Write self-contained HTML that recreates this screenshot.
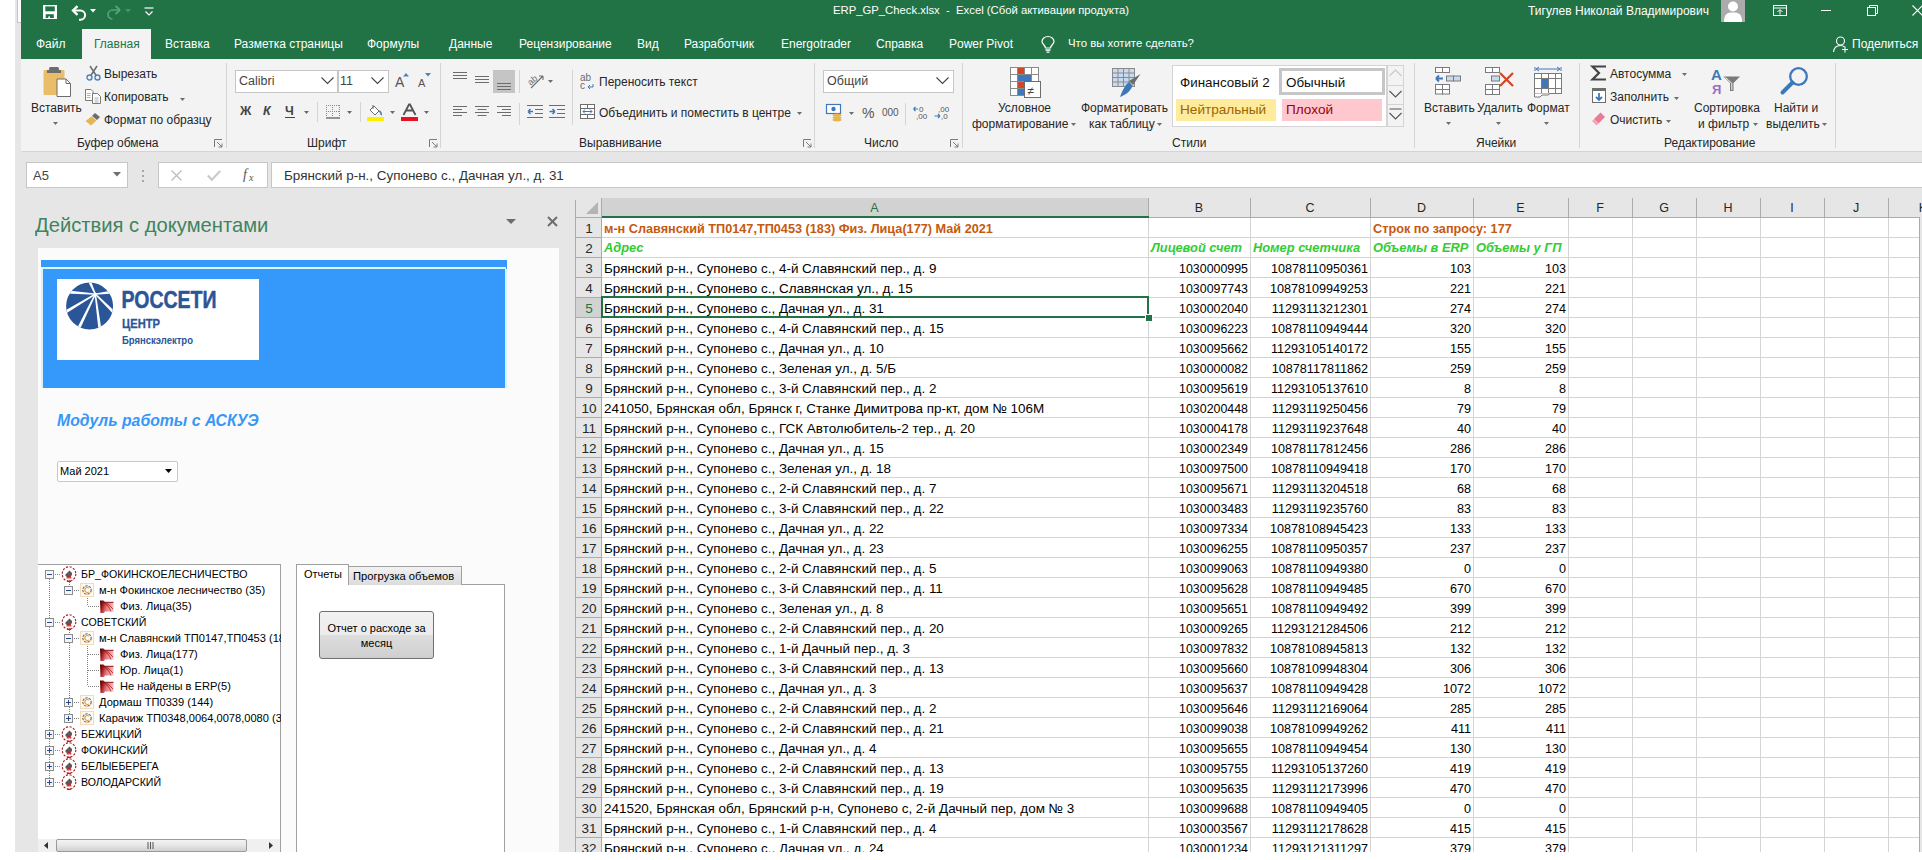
<!DOCTYPE html>
<html><head><meta charset="utf-8"><title>Excel</title>
<style>
html,body{margin:0;padding:0;}
body{width:1922px;height:860px;overflow:hidden;background:#fff;font-family:"Liberation Sans", sans-serif;}
#root{position:relative;width:1922px;height:860px;overflow:hidden;}
.t{position:absolute;white-space:pre;}
.r{position:absolute;}
.s{position:absolute;overflow:visible;}
</style></head><body><div id="root">
<div class="r" style="left:15px;top:0px;width:1907px;height:852px;background:#e6e6e6;"></div><div class="r" style="left:17px;top:0px;width:4px;height:22px;background:#fdfdfd;"></div><div class="r" style="left:17px;top:0px;width:1px;height:22px;background:#c4c4c4;"></div><div class="r" style="left:17px;top:22px;width:4px;height:1px;background:#c4c4c4;"></div><div class="r" style="left:21px;top:0px;width:1901px;height:59px;background:#217346;"></div><div class="r" style="left:21px;top:59px;width:1901px;height:92px;background:#f3f3f3;"></div><div class="r" style="left:21px;top:151px;width:1901px;height:1px;background:#d5d5d5;"></div><svg class="s" style="left:43px;top:5px;" width="14" height="14" viewBox="0 0 14 14"><rect x="0" y="0" width="14" height="14" fill="#fff"/><rect x="2.3" y="1.4" width="9.5" height="4.9" fill="#217346"/><rect x="2.7" y="9.2" width="8.1" height="3.8" fill="#217346"/><rect x="5.3" y="11.4" width="1.7" height="1.7" fill="#fff"/></svg><svg class="s" style="left:71px;top:4.5px;" width="16" height="17" viewBox="0 0 16 17"><path d="M6.5 1.2 L2 5.5 L6.5 9.8" fill="none" stroke="#fff" stroke-width="2.3"/><path d="M2.5 5.5 H9.5 A4.6 4.6 0 0 1 9.5 14.7 H8" fill="none" stroke="#fff" stroke-width="2"/></svg><svg class="s" style="left:90px;top:9px;" width="6" height="4" viewBox="0 0 6 4"><path d="M0 0 H6 L3 3.5 Z" fill="#fff"/></svg><svg class="s" style="left:106px;top:4px;" width="16" height="16" viewBox="0 0 16 16"><path d="M14 6 L9.5 2 M14 6 L9.5 10 M14 6 H6.5 A4.5 4.5 0 0 0 6.5 15" fill="none" stroke="#5aa07a" stroke-width="1.7"/></svg><svg class="s" style="left:125px;top:9px;" width="6" height="4" viewBox="0 0 6 4"><path d="M0 0 H6 L3 3.5 Z" fill="#4a9068"/></svg><svg class="s" style="left:144px;top:7px;" width="10" height="10" viewBox="0 0 10 10"><path d="M0.5 1 H9.5" stroke="#fff" stroke-width="1.2"/><path d="M1.5 4.5 L5 8 L8.5 4.5" fill="none" stroke="#fff" stroke-width="1.2"/></svg><div class="t" style="left:833px;top:5.43px;font-size:11.3px;line-height:11.3px;color:#ffffff;font-weight:normal;font-style:normal;">ERP_GP_Check.xlsx  -  Excel (Сбой активации продукта)</div><div class="t" style="left:1528px;top:4.84px;font-size:12px;line-height:12px;color:#ffffff;font-weight:normal;font-style:normal;">Тигулев Николай Владимирович</div><div class="r" style="left:1721px;top:0px;width:24px;height:22px;background:#ababab;"></div><svg class="s" style="left:1721px;top:0px;" width="24" height="22" viewBox="0 0 24 22"><circle cx="12" cy="6.5" r="5" fill="#fff"/><path d="M3 22 C3 14 6 12.5 12 12.5 C18 12.5 21 14 21 22 Z" fill="#fff"/></svg><svg class="s" style="left:1773px;top:5px;" width="14" height="11" viewBox="0 0 14 11"><rect x="0.5" y="0.5" width="13" height="10" fill="none" stroke="#fff"/><path d="M0.5 3 H13.5" stroke="#fff"/><path d="M7 9.5 V5 M4.5 7 L7 4.5 L9.5 7" fill="none" stroke="#fff"/></svg><div class="r" style="left:1821px;top:10px;width:10px;height:1px;background:#ffffff;"></div><svg class="s" style="left:1867px;top:5px;" width="11" height="11" viewBox="0 0 11 11"><rect x="0.5" y="2.5" width="8" height="8" fill="none" stroke="#fff"/><path d="M2.5 2.5 V0.5 H10.5 V8.5 H8.5" fill="none" stroke="#fff"/></svg><svg class="s" style="left:1912px;top:5px;" width="11" height="11" viewBox="0 0 11 11"><path d="M0.5 0.5 L10.5 10.5 M10.5 0.5 L0.5 10.5" stroke="#fff" stroke-width="1.1"/></svg><div class="r" style="left:82px;top:29px;width:69px;height:30px;background:#f3f3f3;"></div><div class="t" style="left:36px;top:37.84px;font-size:12px;line-height:12px;color:#ffffff;font-weight:normal;font-style:normal;">Файл</div><div class="t" style="left:94px;top:37.84px;font-size:12px;line-height:12px;color:#217346;font-weight:normal;font-style:normal;">Главная</div><div class="t" style="left:165px;top:37.84px;font-size:12px;line-height:12px;color:#ffffff;font-weight:normal;font-style:normal;">Вставка</div><div class="t" style="left:234px;top:37.84px;font-size:12px;line-height:12px;color:#ffffff;font-weight:normal;font-style:normal;">Разметка страницы</div><div class="t" style="left:367px;top:37.84px;font-size:12px;line-height:12px;color:#ffffff;font-weight:normal;font-style:normal;">Формулы</div><div class="t" style="left:449px;top:37.84px;font-size:12px;line-height:12px;color:#ffffff;font-weight:normal;font-style:normal;">Данные</div><div class="t" style="left:519px;top:37.84px;font-size:12px;line-height:12px;color:#ffffff;font-weight:normal;font-style:normal;">Рецензирование</div><div class="t" style="left:637px;top:37.84px;font-size:12px;line-height:12px;color:#ffffff;font-weight:normal;font-style:normal;">Вид</div><div class="t" style="left:684px;top:37.84px;font-size:12px;line-height:12px;color:#ffffff;font-weight:normal;font-style:normal;">Разработчик</div><div class="t" style="left:781px;top:37.84px;font-size:12px;line-height:12px;color:#ffffff;font-weight:normal;font-style:normal;">Energotrader</div><div class="t" style="left:876px;top:37.84px;font-size:12px;line-height:12px;color:#ffffff;font-weight:normal;font-style:normal;">Справка</div><div class="t" style="left:949px;top:37.84px;font-size:12px;line-height:12px;color:#ffffff;font-weight:normal;font-style:normal;">Power Pivot</div><svg class="s" style="left:1041px;top:36px;" width="14" height="18" viewBox="0 0 14 18"><path d="M4.5 12 C4.5 9.5 1 8 1 5.5 A6 5 0 0 1 13 5.5 C13 8 9.5 9.5 9.5 12 Z" fill="none" stroke="#fff" stroke-width="1.2"/><path d="M4.5 14 H9.5 M5.5 16.2 H8.5" stroke="#fff" stroke-width="1.3"/></svg><div class="t" style="left:1068px;top:38.35px;font-size:11.4px;line-height:11.4px;color:#ffffff;font-weight:normal;font-style:normal;">Что вы хотите сделать?</div><svg class="s" style="left:1833px;top:36px;" width="16" height="17" viewBox="0 0 16 17"><circle cx="7.5" cy="5" r="4" fill="none" stroke="#fff" stroke-width="1.1"/><path d="M0.5 16 C1 11 4 9.5 7.5 9.5 C9 9.5 10.5 10 11.5 11" fill="none" stroke="#fff" stroke-width="1.1"/><path d="M12 10.5 V16.5 M9 13.5 H15" stroke="#fff" stroke-width="1.1"/></svg><div class="t" style="left:1852px;top:37.84px;font-size:12px;line-height:12px;color:#ffffff;font-weight:normal;font-style:normal;">Поделиться</div><svg class="s" style="left:43px;top:67px;" width="28" height="30" viewBox="0 0 28 30"><rect x="0.5" y="3" width="21" height="25" rx="1" fill="#e8b44f" opacity="0.85"/><rect x="6" y="0" width="10" height="3.5" rx="1.5" fill="#6d6d6d"/><rect x="4" y="3" width="14" height="3" fill="#6d6d6d"/><path d="M14 12 H23 L27.5 16.5 V29.5 H14 Z" fill="#fff" stroke="#6d6d6d"/><path d="M23 12 V16.5 H27.5" fill="none" stroke="#6d6d6d"/></svg><div class="t" style="left:31px;top:101.84px;font-size:12px;line-height:12px;color:#262626;font-weight:normal;font-style:normal;">Вставить</div><svg class="s" style="left:53px;top:122px;" width="6" height="4" viewBox="0 0 6 4"><path d="M0 0 H5 L2.5 3 Z" fill="#6d6d6d"/></svg><svg class="s" style="left:86px;top:65px;" width="15" height="16" viewBox="0 0 15 16"><path d="M4 1 L10.5 11 M11 1 L4.5 11" stroke="#6d6d6d" stroke-width="1.5"/><circle cx="3.5" cy="12.5" r="2.5" fill="none" stroke="#4a84c0" stroke-width="1.4"/><circle cx="11.5" cy="12.5" r="2.5" fill="none" stroke="#4a84c0" stroke-width="1.4"/></svg><div class="t" style="left:104px;top:67.84px;font-size:12px;line-height:12px;color:#262626;font-weight:normal;font-style:normal;">Вырезать</div><svg class="s" style="left:85px;top:89px;" width="16" height="15" viewBox="0 0 16 15"><path d="M0.5 0.5 H6 L8 2.5 V11.5 H0.5 Z" fill="#fff" stroke="#7a7a7a"/><path d="M2 4.5 H5.5 M2 6.5 H5.5 M2 8.5 H5.5" stroke="#7a7a7a" stroke-width="0.6"/><path d="M7.5 4.5 H12.5 L15.5 7.5 V14.5 H7.5 Z" fill="#fff" stroke="#7a7a7a"/><path d="M9.5 9 H13.5 M9.5 11 H13.5 M9.5 13 H13.5" stroke="#7a7a7a" stroke-width="0.6"/></svg><div class="t" style="left:104px;top:90.84px;font-size:12px;line-height:12px;color:#262626;font-weight:normal;font-style:normal;">Копировать</div><svg class="s" style="left:180px;top:98px;" width="6" height="4" viewBox="0 0 6 4"><path d="M0 0 H5 L2.5 3 Z" fill="#6d6d6d"/></svg><svg class="s" style="left:85px;top:112px;" width="17" height="14" viewBox="0 0 17 14"><path d="M10 1 L15 5 L12 8 L7 4 Z" fill="#6d6d6d"/><path d="M6.5 4.5 L11.5 8.5 L6 13.5 L0.5 9 Z" fill="#e8b44f"/></svg><div class="t" style="left:104px;top:113.84px;font-size:12px;line-height:12px;color:#262626;font-weight:normal;font-style:normal;">Формат по образцу</div><div class="t" style="left:77px;top:136.84px;font-size:12px;line-height:12px;color:#262626;font-weight:normal;font-style:normal;">Буфер обмена</div><svg class="s" style="left:214px;top:139px;" width="9" height="9" viewBox="0 0 9 9"><path d="M0.5 8 V0.5 H8" fill="none" stroke="#7a7a7a"/><path d="M3 3 L8 8 M8 4.5 V8 H4.5" fill="none" stroke="#7a7a7a"/></svg><div class="r" style="left:226px;top:63px;width:1px;height:85px;background:#d4d4d4;"></div><div class="r" style="left:235px;top:70px;width:103px;height:23px;background:#ffffff;box-sizing:border-box;border:1px solid #c6c6c6;"></div><div class="t" style="left:239px;top:75.42px;font-size:12.5px;line-height:12.5px;color:#444;font-weight:normal;font-style:normal;">Calibri</div><svg class="s" style="left:321px;top:77px;" width="13" height="8" viewBox="0 0 13 8"><path d="M0.5 0.5 L6.5 6.5 L12.5 0.5" fill="none" stroke="#444" stroke-width="1.1"/></svg><div class="r" style="left:338px;top:70px;width:51px;height:23px;background:#ffffff;box-sizing:border-box;border:1px solid #c6c6c6;"></div><div class="t" style="left:340px;top:75.42px;font-size:12.5px;line-height:12.5px;color:#444;font-weight:normal;font-style:normal;">11</div><svg class="s" style="left:371px;top:77px;" width="13" height="8" viewBox="0 0 13 8"><path d="M0.5 0.5 L6.5 6.5 L12.5 0.5" fill="none" stroke="#444" stroke-width="1.1"/></svg><div class="t" style="left:395px;top:75.15px;font-size:14px;line-height:14px;color:#555;font-weight:normal;font-style:normal;">A</div><svg class="s" style="left:403px;top:73px;" width="6" height="4" viewBox="0 0 6 4"><path d="M0 3.5 L3 0 L6 3.5 Z" fill="#4a84c0"/></svg><div class="t" style="left:418px;top:77.69px;font-size:11px;line-height:11px;color:#555;font-weight:normal;font-style:normal;">A</div><svg class="s" style="left:425px;top:73px;" width="6" height="4" viewBox="0 0 6 4"><path d="M0 0 L3 3.5 L6 0 Z" fill="#4a84c0"/></svg><div class="t" style="left:240px;top:105.42px;font-size:12.5px;line-height:12.5px;color:#444;font-weight:bold;font-style:normal;">Ж</div><div class="t" style="left:263px;top:105.42px;font-size:12.5px;line-height:12.5px;color:#444;font-weight:bold;font-style:italic;">К</div><div class="t" style="left:285px;top:105.42px;font-size:12.5px;line-height:12.5px;color:#444;font-weight:bold;font-style:normal;">Ч</div><div class="r" style="left:285px;top:117px;width:10px;height:1.2px;background:#444;"></div><svg class="s" style="left:304px;top:111px;" width="6" height="4" viewBox="0 0 6 4"><path d="M0 0 H5 L2.5 3 Z" fill="#6d6d6d"/></svg><div class="r" style="left:317px;top:102px;width:1px;height:20px;background:#d4d4d4;"></div><svg class="s" style="left:326px;top:105px;" width="14" height="14" viewBox="0 0 14 14"><g fill="#8a8a8a"><rect x="0" y="0" width="1" height="1"/><rect x="2" y="0" width="1" height="1"/><rect x="4" y="0" width="1" height="1"/><rect x="6" y="0" width="1" height="1"/><rect x="8" y="0" width="1" height="1"/><rect x="10" y="0" width="1" height="1"/><rect x="12" y="0" width="1" height="1"/><rect x="0" y="6" width="1" height="1"/><rect x="2" y="6" width="1" height="1"/><rect x="4" y="6" width="1" height="1"/><rect x="6" y="6" width="1" height="1"/><rect x="8" y="6" width="1" height="1"/><rect x="10" y="6" width="1" height="1"/><rect x="12" y="6" width="1" height="1"/><rect x="0" y="0" width="1" height="1"/><rect x="0" y="2" width="1" height="1"/><rect x="0" y="4" width="1" height="1"/><rect x="0" y="6" width="1" height="1"/><rect x="0" y="8" width="1" height="1"/><rect x="0" y="10" width="1" height="1"/><rect x="6" y="0" width="1" height="1"/><rect x="6" y="2" width="1" height="1"/><rect x="6" y="4" width="1" height="1"/><rect x="6" y="6" width="1" height="1"/><rect x="6" y="8" width="1" height="1"/><rect x="6" y="10" width="1" height="1"/><rect x="13" y="0" width="1" height="1"/><rect x="13" y="2" width="1" height="1"/><rect x="13" y="4" width="1" height="1"/><rect x="13" y="6" width="1" height="1"/><rect x="13" y="8" width="1" height="1"/><rect x="13" y="10" width="1" height="1"/></g><path d="M0 13 H14" stroke="#555" stroke-width="1.2"/></svg><svg class="s" style="left:347px;top:111px;" width="6" height="4" viewBox="0 0 6 4"><path d="M0 0 H5 L2.5 3 Z" fill="#6d6d6d"/></svg><div class="r" style="left:360px;top:102px;width:1px;height:20px;background:#d4d4d4;"></div><svg class="s" style="left:367px;top:104px;" width="18" height="17" viewBox="0 0 18 17"><path d="M6 1 V5 M3 6 L7 2 L12 7 L8 11 Z" fill="#fff" stroke="#6d6d6d" stroke-width="1"/><path d="M12 7 C14 8 14.5 10 14 11" stroke="#4a84c0" stroke-width="1.8" fill="none"/><rect x="0" y="13" width="17" height="4" fill="#ffee00"/></svg><svg class="s" style="left:390px;top:111px;" width="6" height="4" viewBox="0 0 6 4"><path d="M0 0 H5 L2.5 3 Z" fill="#6d6d6d"/></svg><svg class="s" style="left:401px;top:104px;" width="17" height="17" viewBox="0 0 17 17"><path d="M2.5 11 L8 0.5 H9 L14.5 11 M5 6.5 H12" fill="none" stroke="#555" stroke-width="1.8"/><rect x="0" y="13" width="17" height="4" fill="#e81123"/></svg><svg class="s" style="left:424px;top:111px;" width="6" height="4" viewBox="0 0 6 4"><path d="M0 0 H5 L2.5 3 Z" fill="#6d6d6d"/></svg><div class="t" style="left:307px;top:136.84px;font-size:12px;line-height:12px;color:#262626;font-weight:normal;font-style:normal;">Шрифт</div><svg class="s" style="left:429px;top:139px;" width="9" height="9" viewBox="0 0 9 9"><path d="M0.5 8 V0.5 H8" fill="none" stroke="#7a7a7a"/><path d="M3 3 L8 8 M8 4.5 V8 H4.5" fill="none" stroke="#7a7a7a"/></svg><div class="r" style="left:440px;top:63px;width:1px;height:85px;background:#d4d4d4;"></div><svg class="s" style="left:453px;top:72px;" width="16" height="16" viewBox="0 0 16 16"><rect x="0" y="0" width="14" height="1" fill="#6d6d6d"/><rect x="0" y="3" width="14" height="1" fill="#6d6d6d"/><rect x="0" y="6" width="14" height="1" fill="#6d6d6d"/></svg><svg class="s" style="left:475px;top:76px;" width="16" height="16" viewBox="0 0 16 16"><rect x="0" y="0" width="14" height="1" fill="#6d6d6d"/><rect x="0" y="3" width="14" height="1" fill="#6d6d6d"/><rect x="0" y="6" width="14" height="1" fill="#6d6d6d"/></svg><div class="r" style="left:493px;top:70px;width:22px;height:23px;background:#c5c5c5;"></div><svg class="s" style="left:497px;top:83px;" width="16" height="16" viewBox="0 0 16 16"><rect x="0" y="0" width="14" height="1" fill="#6d6d6d"/><rect x="0" y="3" width="14" height="1" fill="#6d6d6d"/><rect x="0" y="6" width="14" height="1" fill="#6d6d6d"/></svg><svg class="s" style="left:527px;top:73px;" width="19" height="16" viewBox="0 0 19 16"><text x="1" y="10" font-size="9" font-family="Liberation Sans" fill="#6d6d6d" transform="rotate(-40 6 8)">ab</text><path d="M4 15 L16 3 M16 3 H12 M16 3 V7" fill="none" stroke="#6d6d6d" stroke-width="1.1"/></svg><svg class="s" style="left:548px;top:80px;" width="6" height="4" viewBox="0 0 6 4"><path d="M0 0 H5 L2.5 3 Z" fill="#6d6d6d"/></svg><div class="r" style="left:519px;top:70px;width:1px;height:23px;background:#d4d4d4;"></div><svg class="s" style="left:453px;top:106px;" width="16" height="16" viewBox="0 0 16 16"><rect x="0" y="0" width="14" height="1" fill="#6d6d6d"/><rect x="0" y="3" width="9" height="1" fill="#6d6d6d"/><rect x="0" y="6" width="14" height="1" fill="#6d6d6d"/><rect x="0" y="9" width="9" height="1" fill="#6d6d6d"/></svg><svg class="s" style="left:475px;top:106px;" width="16" height="16" viewBox="0 0 16 16"><rect x="0" y="0" width="14" height="1" fill="#6d6d6d"/><rect x="2.5" y="3" width="9" height="1" fill="#6d6d6d"/><rect x="0" y="6" width="14" height="1" fill="#6d6d6d"/><rect x="2.5" y="9" width="9" height="1" fill="#6d6d6d"/></svg><svg class="s" style="left:497px;top:106px;" width="16" height="16" viewBox="0 0 16 16"><rect x="0" y="0" width="14" height="1" fill="#6d6d6d"/><rect x="5" y="3" width="9" height="1" fill="#6d6d6d"/><rect x="0" y="6" width="14" height="1" fill="#6d6d6d"/><rect x="5" y="9" width="9" height="1" fill="#6d6d6d"/></svg><div class="r" style="left:519px;top:103px;width:1px;height:22px;background:#d4d4d4;"></div><svg class="s" style="left:527px;top:105px;" width="17" height="13" viewBox="0 0 17 13"><rect x="0" y="0" width="16" height="1" fill="#6d6d6d"/><rect x="8" y="4" width="8" height="1" fill="#6d6d6d"/><rect x="8" y="8" width="8" height="1" fill="#6d6d6d"/><rect x="0" y="12" width="16" height="1" fill="#6d6d6d"/><path d="M1 6.5 H6 M1 6.5 L3.5 4 M1 6.5 L3.5 9" stroke="#3f78ba" stroke-width="1.5" fill="none"/></svg><svg class="s" style="left:549px;top:105px;" width="17" height="13" viewBox="0 0 17 13"><rect x="0" y="0" width="16" height="1" fill="#6d6d6d"/><rect x="8" y="4" width="8" height="1" fill="#6d6d6d"/><rect x="8" y="8" width="8" height="1" fill="#6d6d6d"/><rect x="0" y="12" width="16" height="1" fill="#6d6d6d"/><path d="M0.5 6.5 H6 M6 6.5 L3.5 4 M6 6.5 L3.5 9" stroke="#3f78ba" stroke-width="1.5" fill="none"/></svg><div class="r" style="left:572px;top:70px;width:1px;height:55px;background:#d4d4d4;"></div><svg class="s" style="left:580px;top:73px;" width="16" height="17" viewBox="0 0 16 17"><text x="0" y="8" font-size="10" font-family="Liberation Sans" fill="#6d6d6d">ab</text><text x="0" y="16" font-size="10" font-family="Liberation Sans" fill="#6d6d6d">c</text><path d="M13 11 V14 H8 M8 14 L10 12 M8 14 L10 16" fill="none" stroke="#3f78ba" stroke-width="1"/></svg><div class="t" style="left:599px;top:75.84px;font-size:12px;line-height:12px;color:#262626;font-weight:normal;font-style:normal;">Переносить текст</div><svg class="s" style="left:580px;top:104px;" width="16" height="16" viewBox="0 0 16 16"><rect x="0.5" y="0.5" width="14" height="14" fill="#fff" stroke="#6d6d6d"/><path d="M0.5 4.5 H14.5 M0.5 10.5 H14.5 M7.5 0.5 V4.5 M7.5 10.5 V14.5" stroke="#6d6d6d"/><path d="M3 7.5 H12 M3 7.5 L5 5.5 M3 7.5 L5 9.5 M12 7.5 L10 5.5 M12 7.5 L10 9.5" stroke="#3f78ba" fill="none"/></svg><div class="t" style="left:599px;top:106.84px;font-size:12px;line-height:12px;color:#262626;font-weight:normal;font-style:normal;">Объединить и поместить в центре</div><svg class="s" style="left:797px;top:112px;" width="6" height="4" viewBox="0 0 6 4"><path d="M0 0 H5 L2.5 3 Z" fill="#6d6d6d"/></svg><div class="t" style="left:579px;top:136.84px;font-size:12px;line-height:12px;color:#262626;font-weight:normal;font-style:normal;">Выравнивание</div><svg class="s" style="left:803px;top:139px;" width="9" height="9" viewBox="0 0 9 9"><path d="M0.5 8 V0.5 H8" fill="none" stroke="#7a7a7a"/><path d="M3 3 L8 8 M8 4.5 V8 H4.5" fill="none" stroke="#7a7a7a"/></svg><div class="r" style="left:814px;top:63px;width:1px;height:85px;background:#d4d4d4;"></div><div class="r" style="left:823px;top:70px;width:131px;height:23px;background:#ffffff;box-sizing:border-box;border:1px solid #c6c6c6;"></div><div class="t" style="left:827px;top:75.42px;font-size:12.5px;line-height:12.5px;color:#444;font-weight:normal;font-style:normal;">Общий</div><svg class="s" style="left:936px;top:77px;" width="13" height="8" viewBox="0 0 13 8"><path d="M0.5 0.5 L6.5 6.5 L12.5 0.5" fill="none" stroke="#444" stroke-width="1.1"/></svg><svg class="s" style="left:826px;top:104px;" width="17" height="17" viewBox="0 0 17 17"><rect x="0.5" y="0.5" width="14" height="9" fill="#fff" stroke="#3f78ba" stroke-width="1.2"/><circle cx="7.5" cy="5" r="2.2" fill="#3f78ba"/><ellipse cx="11" cy="11" rx="4.5" ry="1.6" fill="#e8b44f"/><ellipse cx="11" cy="13.5" rx="4.5" ry="1.6" fill="#e8b44f"/><ellipse cx="11" cy="16" rx="4.5" ry="1.4" fill="#e8b44f"/></svg><svg class="s" style="left:849px;top:112px;" width="6" height="4" viewBox="0 0 6 4"><path d="M0 0 H5 L2.5 3 Z" fill="#6d6d6d"/></svg><div class="t" style="left:862px;top:106.15px;font-size:14px;line-height:14px;color:#555;font-weight:normal;font-style:normal;">%</div><div class="t" style="left:882px;top:107.53px;font-size:10px;line-height:10px;color:#555;font-weight:normal;font-style:normal;">000</div><div class="r" style="left:905px;top:103px;width:1px;height:22px;background:#d4d4d4;"></div><svg class="s" style="left:913px;top:105px;" width="16" height="15" viewBox="0 0 16 15"><text x="6" y="7" font-size="8" font-family="Liberation Sans" fill="#555">0</text><text x="3" y="14" font-size="8" font-family="Liberation Sans" fill="#555">,00</text><path d="M0.5 4 H5 M0.5 4 L2.5 2 M0.5 4 L2.5 6" stroke="#3f78ba" fill="none" stroke-width="1.1"/></svg><svg class="s" style="left:934px;top:105px;" width="16" height="15" viewBox="0 0 16 15"><text x="4" y="7" font-size="8" font-family="Liberation Sans" fill="#555">,00</text><text x="7" y="14" font-size="8" font-family="Liberation Sans" fill="#555">,0</text><path d="M0.5 11 H6 M6 11 L4 9 M6 11 L4 13" stroke="#3f78ba" fill="none" stroke-width="1.1"/></svg><div class="t" style="left:864px;top:136.84px;font-size:12px;line-height:12px;color:#262626;font-weight:normal;font-style:normal;">Число</div><svg class="s" style="left:950px;top:139px;" width="9" height="9" viewBox="0 0 9 9"><path d="M0.5 8 V0.5 H8" fill="none" stroke="#7a7a7a"/><path d="M3 3 L8 8 M8 4.5 V8 H4.5" fill="none" stroke="#7a7a7a"/></svg><div class="r" style="left:962px;top:63px;width:1px;height:85px;background:#d4d4d4;"></div><svg class="s" style="left:1010px;top:67px;" width="31" height="31" viewBox="0 0 31 31"><g stroke="#8a8a8a" fill="#fff"><rect x="0.5" y="0.5" width="28" height="28"/></g><path d="M0.5 7.5 H28.5 M0.5 14.5 H28.5 M0.5 21.5 H28.5 M7.5 0.5 V28.5 M14.5 0.5 V28.5 M21.5 0.5 V28.5" stroke="#8a8a8a"/><rect x="8" y="1" width="6" height="6" fill="#d24726"/><rect x="8" y="8" width="13" height="6" fill="#3f78ba"/><rect x="8" y="15" width="9" height="6" fill="#d24726"/><rect x="8" y="22" width="6" height="6" fill="#3f78ba"/><rect x="14.5" y="14.5" width="16" height="16" fill="#fff" stroke="#6d6d6d"/><text x="17.5" y="27.5" font-size="12" font-family="Liberation Sans" fill="#444">≠</text></svg><div class="t" style="left:998px;top:101.84px;font-size:12px;line-height:12px;color:#262626;font-weight:normal;font-style:normal;">Условное</div><div class="t" style="left:972px;top:117.84px;font-size:12px;line-height:12px;color:#262626;font-weight:normal;font-style:normal;">форматирование</div><svg class="s" style="left:1071px;top:123px;" width="6" height="4" viewBox="0 0 6 4"><path d="M0 0 H5 L2.5 3 Z" fill="#6d6d6d"/></svg><svg class="s" style="left:1112px;top:68px;" width="30" height="30" viewBox="0 0 30 30"><rect x="0.5" y="0.5" width="22" height="18" fill="#c8daf0" stroke="#8a8a8a"/><path d="M0.5 5 H22.5 M0.5 9.5 H22.5 M0.5 14 H22.5 M6 0.5 V18.5 M11.5 0.5 V18.5 M17 0.5 V18.5" stroke="#8a8a8a"/><path d="M28.5 6 L21 17 L17 13 Z" fill="#6d6d6d"/><path d="M17 14 L20.5 17.5 C19 22 16 26 8 29 C10 24 12 18 17 14 Z" fill="#3f78ba"/></svg><div class="t" style="left:1081px;top:101.84px;font-size:12px;line-height:12px;color:#262626;font-weight:normal;font-style:normal;">Форматировать</div><div class="t" style="left:1089px;top:117.84px;font-size:12px;line-height:12px;color:#262626;font-weight:normal;font-style:normal;">как таблицу</div><svg class="s" style="left:1157px;top:123px;" width="6" height="4" viewBox="0 0 6 4"><path d="M0 0 H5 L2.5 3 Z" fill="#6d6d6d"/></svg><div class="r" style="left:1172px;top:65px;width:215px;height:62px;background:#ffffff;box-sizing:border-box;border:1px solid #d4d4d4;"></div><div class="t" style="left:1180px;top:75.66px;font-size:13.4px;line-height:13.4px;color:#111;font-weight:normal;font-style:normal;">Финансовый 2</div><div class="r" style="left:1279px;top:68px;width:106px;height:27px;background:#ffffff;box-sizing:border-box;border:3px solid #c6c6c6;"></div><div class="t" style="left:1286px;top:75.66px;font-size:13.4px;line-height:13.4px;color:#111;font-weight:normal;font-style:normal;">Обычный</div><div class="r" style="left:1176px;top:99px;width:100px;height:22px;background:#ffeb9c;"></div><div class="t" style="left:1180px;top:103.49px;font-size:13.6px;line-height:13.6px;color:#9c6500;font-weight:normal;font-style:normal;">Нейтральный</div><div class="r" style="left:1282px;top:99px;width:100px;height:22px;background:#ffc7ce;"></div><div class="t" style="left:1286px;top:103.49px;font-size:13.6px;line-height:13.6px;color:#9c0006;font-weight:normal;font-style:normal;">Плохой</div><div class="r" style="left:1387px;top:65px;width:17px;height:62px;background:#f3f3f3;box-sizing:border-box;border:1px solid #d4d4d4;"></div><div class="r" style="left:1387px;top:85px;width:17px;height:1px;background:#d4d4d4;"></div><div class="r" style="left:1387px;top:104px;width:17px;height:1px;background:#d4d4d4;"></div><svg class="s" style="left:1389px;top:69px;" width="13" height="8" viewBox="0 0 13 8"><path d="M0.5 7 L6.5 1 L12.5 7" fill="none" stroke="#c8c8c8" stroke-width="1.1"/></svg><svg class="s" style="left:1389px;top:90px;" width="13" height="8" viewBox="0 0 13 8"><path d="M0.5 1 L6.5 7 L12.5 1" fill="none" stroke="#555" stroke-width="1.1"/></svg><svg class="s" style="left:1389px;top:108px;" width="13" height="13" viewBox="0 0 13 13"><path d="M0.5 1 H12.5" stroke="#555"/><path d="M0.5 5 L6.5 11 L12.5 5" fill="none" stroke="#555" stroke-width="1.1"/></svg><div class="t" style="left:1172px;top:136.84px;font-size:12px;line-height:12px;color:#262626;font-weight:normal;font-style:normal;">Стили</div><div class="r" style="left:1414px;top:63px;width:1px;height:85px;background:#d4d4d4;"></div><svg class="s" style="left:1435px;top:67px;" width="27" height="28" viewBox="0 0 27 28"><g fill="#fff" stroke="#7a7a7a"><rect x="0.5" y="0.5" width="7" height="5"/><rect x="7.5" y="0.5" width="7" height="5"/><rect x="0.5" y="17.5" width="7" height="5"/><rect x="7.5" y="17.5" width="7" height="5"/><rect x="0.5" y="22.5" width="7" height="4.5"/><rect x="7.5" y="22.5" width="7" height="4.5"/></g><g fill="#c8daf0" stroke="#7a7a7a"><rect x="11.5" y="9" width="7" height="5"/><rect x="18.5" y="9" width="7" height="5"/></g><path d="M1 11.5 H8 M1 11.5 L4 8.5 M1 11.5 L4 14.5" stroke="#3f78ba" stroke-width="1.8" fill="none"/></svg><div class="t" style="left:1424px;top:101.84px;font-size:12px;line-height:12px;color:#262626;font-weight:normal;font-style:normal;">Вставить</div><svg class="s" style="left:1446px;top:122px;" width="6" height="4" viewBox="0 0 6 4"><path d="M0 0 H5 L2.5 3 Z" fill="#6d6d6d"/></svg><svg class="s" style="left:1485px;top:67px;" width="30" height="29" viewBox="0 0 30 29"><g fill="#fff" stroke="#7a7a7a"><rect x="0.5" y="0.5" width="7" height="5"/><rect x="7.5" y="0.5" width="7" height="5"/><rect x="0.5" y="17.5" width="7" height="5"/><rect x="7.5" y="17.5" width="7" height="5"/><rect x="0.5" y="22.5" width="7" height="5"/><rect x="7.5" y="22.5" width="7" height="5"/></g><g fill="#c8daf0" stroke="#7a7a7a"><rect x="6.5" y="9" width="8" height="5"/></g><path d="M15 6 L28 19 M28 6 L15 19" stroke="#d24726" stroke-width="2.2"/></svg><div class="t" style="left:1477px;top:101.84px;font-size:12px;line-height:12px;color:#262626;font-weight:normal;font-style:normal;">Удалить</div><svg class="s" style="left:1496px;top:122px;" width="6" height="4" viewBox="0 0 6 4"><path d="M0 0 H5 L2.5 3 Z" fill="#6d6d6d"/></svg><svg class="s" style="left:1534px;top:66px;" width="29" height="32" viewBox="0 0 29 32"><path d="M1 1 V5 M27 1 V5 M2 3 H26 M2 3 L5 1 M2 3 L5 5 M26 3 L23 1 M26 3 L23 5" stroke="#3f78ba" fill="none"/><rect x="0.5" y="7.5" width="27" height="20" fill="#fff" stroke="#7a7a7a"/><path d="M0.5 12.5 H27.5 M0.5 22.5 H27.5 M7.5 7.5 V27.5 M14.5 7.5 V27.5 M21.5 7.5 V27.5" stroke="#7a7a7a"/><rect x="8" y="13" width="6" height="9" fill="#3f78ba"/><path d="M0.5 27.5 V31 H6 L8 29 H14 L16 27.5" fill="#fff" stroke="#7a7a7a"/></svg><div class="t" style="left:1527px;top:101.84px;font-size:12px;line-height:12px;color:#262626;font-weight:normal;font-style:normal;">Формат</div><svg class="s" style="left:1544px;top:122px;" width="6" height="4" viewBox="0 0 6 4"><path d="M0 0 H5 L2.5 3 Z" fill="#6d6d6d"/></svg><div class="t" style="left:1476px;top:136.84px;font-size:12px;line-height:12px;color:#262626;font-weight:normal;font-style:normal;">Ячейки</div><div class="r" style="left:1579px;top:63px;width:1px;height:85px;background:#d4d4d4;"></div><svg class="s" style="left:1591px;top:65px;" width="16" height="16" viewBox="0 0 16 16"><path d="M15 1.5 H1.5 L8 8 L1.5 14.5 H15" fill="none" stroke="#444" stroke-width="2.2"/></svg><div class="t" style="left:1610px;top:67.84px;font-size:12px;line-height:12px;color:#262626;font-weight:normal;font-style:normal;">Автосумма</div><svg class="s" style="left:1682px;top:73px;" width="6" height="4" viewBox="0 0 6 4"><path d="M0 0 H5 L2.5 3 Z" fill="#6d6d6d"/></svg><svg class="s" style="left:1592px;top:88px;" width="15" height="16" viewBox="0 0 15 16"><rect x="0.5" y="0.5" width="13" height="14" fill="#fff" stroke="#6d6d6d"/><rect x="0" y="0" width="14" height="3" fill="#6d6d6d"/><path d="M7 5 V12 M4 9 L7 12 L10 9" stroke="#3f78ba" stroke-width="1.8" fill="none"/></svg><div class="t" style="left:1610px;top:90.84px;font-size:12px;line-height:12px;color:#262626;font-weight:normal;font-style:normal;">Заполнить</div><svg class="s" style="left:1674px;top:97px;" width="6" height="4" viewBox="0 0 6 4"><path d="M0 0 H5 L2.5 3 Z" fill="#6d6d6d"/></svg><svg class="s" style="left:1592px;top:112px;" width="14" height="14" viewBox="0 0 14 14"><path d="M8.5 0.5 L13 5 L6.5 11.5 L2 7 Z" fill="#e77d94"/><path d="M2 7 L6.5 11.5 L4.5 13.5 L0 9 Z" fill="#f0a8b8"/></svg><div class="t" style="left:1610px;top:113.84px;font-size:12px;line-height:12px;color:#262626;font-weight:normal;font-style:normal;">Очистить</div><svg class="s" style="left:1666px;top:120px;" width="6" height="4" viewBox="0 0 6 4"><path d="M0 0 H5 L2.5 3 Z" fill="#6d6d6d"/></svg><svg class="s" style="left:1711px;top:67px;" width="31" height="29" viewBox="0 0 31 29"><text x="0" y="13" font-size="15" font-weight="bold" font-family="Liberation Sans" fill="#3f78ba">A</text><text x="1" y="27" font-size="13" font-weight="bold" font-family="Liberation Sans" fill="#9b6bc6">Я</text><path d="M12.5 9.5 H29 L22.5 16 V24 H19 V16 Z" fill="#7a7a7a"/><path d="M14.5 10.5 L20.8 16.3 V23" stroke="#fff" stroke-width="0.9" fill="none"/></svg><div class="t" style="left:1694px;top:101.84px;font-size:12px;line-height:12px;color:#262626;font-weight:normal;font-style:normal;">Сортировка</div><div class="t" style="left:1698px;top:117.84px;font-size:12px;line-height:12px;color:#262626;font-weight:normal;font-style:normal;">и фильтр</div><svg class="s" style="left:1753px;top:123px;" width="6" height="4" viewBox="0 0 6 4"><path d="M0 0 H5 L2.5 3 Z" fill="#6d6d6d"/></svg><svg class="s" style="left:1780px;top:66px;" width="29" height="30" viewBox="0 0 29 30"><circle cx="18.5" cy="10.5" r="8.3" fill="none" stroke="#3f78ba" stroke-width="2.3"/><path d="M12.5 16.5 L2.5 26.5" stroke="#3f78ba" stroke-width="4" stroke-linecap="round"/></svg><div class="t" style="left:1774px;top:101.84px;font-size:12px;line-height:12px;color:#262626;font-weight:normal;font-style:normal;">Найти и</div><div class="t" style="left:1766px;top:117.84px;font-size:12px;line-height:12px;color:#262626;font-weight:normal;font-style:normal;">выделить</div><svg class="s" style="left:1822px;top:123px;" width="6" height="4" viewBox="0 0 6 4"><path d="M0 0 H5 L2.5 3 Z" fill="#6d6d6d"/></svg><div class="t" style="left:1664px;top:136.84px;font-size:12px;line-height:12px;color:#262626;font-weight:normal;font-style:normal;">Редактирование</div><div class="r" style="left:1835px;top:63px;width:1px;height:85px;background:#d4d4d4;"></div><div class="r" style="left:26px;top:162px;width:102px;height:26px;background:#ffffff;box-sizing:border-box;border:1px solid #c6c6c6;"></div><div class="t" style="left:33px;top:169.00px;font-size:13px;line-height:13px;color:#444;font-weight:normal;font-style:normal;">A5</div><svg class="s" style="left:113px;top:172px;" width="8" height="5" viewBox="0 0 8 5"><path d="M0 0 H8 L4 4.5 Z" fill="#6d6d6d"/></svg><div class="r" style="left:142px;top:170px;width:2px;height:2px;background:#a8a8a8;"></div><div class="r" style="left:142px;top:175px;width:2px;height:2px;background:#a8a8a8;"></div><div class="r" style="left:142px;top:180px;width:2px;height:2px;background:#a8a8a8;"></div><div class="r" style="left:158px;top:162px;width:110px;height:26px;background:#ffffff;box-sizing:border-box;border:1px solid #c6c6c6;"></div><svg class="s" style="left:171px;top:170px;" width="11" height="11" viewBox="0 0 11 11"><path d="M0.5 0.5 L10.5 10.5 M10.5 0.5 L0.5 10.5" stroke="#bdbdbd" stroke-width="1.3"/></svg><svg class="s" style="left:207px;top:170px;" width="14" height="11" viewBox="0 0 14 11"><path d="M0.8 5.5 L4.8 9.8 L13.2 1" fill="none" stroke="#c8c8c8" stroke-width="2"/></svg><div class="t" style="left:243px;top:168.15px;font-size:14px;line-height:14px;color:#555;font-weight:normal;font-style:italic;font-family:'Liberation Serif';">f</div><div class="t" style="left:249px;top:172.53px;font-size:10px;line-height:10px;color:#555;font-weight:normal;font-style:italic;font-family:'Liberation Serif';">x</div><div class="r" style="left:271px;top:162px;width:1651px;height:26px;background:#ffffff;box-sizing:border-box;border:1px solid #c6c6c6;border-right:none;"></div><div class="t" style="left:284px;top:168.61px;font-size:13.45px;line-height:13.45px;color:#333;font-weight:normal;font-style:normal;">Брянский р-н., Супонево с., Дачная ул., д. 31</div><div class="t" style="left:35px;top:214.90px;font-size:20.2px;line-height:20.2px;color:#217346;font-weight:normal;font-style:normal;opacity:0.85;">Действия с документами</div><svg class="s" style="left:506px;top:219px;" width="10" height="6" viewBox="0 0 10 6"><path d="M0 0 H10 L5 5 Z" fill="#6d6d6d"/></svg><svg class="s" style="left:547px;top:216px;" width="11" height="11" viewBox="0 0 11 11"><path d="M1 1 L10 10 M10 1 L1 10" stroke="#6d6d6d" stroke-width="2"/></svg><div class="r" style="left:38px;top:248px;width:521px;height:604px;background:#fbfbfc;"></div><div class="r" style="left:41px;top:260px;width:466px;height:128px;background:#3598fb;"></div><div class="r" style="left:41px;top:267px;width:465px;height:2px;background:#d8f8ff;"></div><div class="r" style="left:41px;top:269px;width:2px;height:119px;background:#d8f0fc;"></div><div class="r" style="left:505px;top:269px;width:2px;height:119px;background:#d8f0fc;"></div><div class="r" style="left:57px;top:279px;width:202px;height:81px;background:#ffffff;"></div><svg class="s" style="left:66px;top:282px;" width="48" height="48" viewBox="0 0 48 48"><defs><clipPath id="cc"><circle cx="23.6" cy="24" r="23.5"/></clipPath></defs><circle cx="23.6" cy="24" r="23.5" fill="#2a5597"/><g clip-path="url(#cc)"><polygon points="29.94,11.81 23.19,-5.33 20.27,-4.01 28.66,12.39" fill="#fff"/><polygon points="29.35,11.40 -1.06,8.14 -1.31,11.33 29.25,12.80" fill="#fff"/><polygon points="28.94,11.50 -5.26,31.14 -3.61,33.87 29.66,12.70" fill="#fff"/><polygon points="28.67,11.79 9.54,49.20 12.42,50.60 29.93,12.41" fill="#fff"/><polygon points="28.61,12.19 32.89,51.86 36.07,51.44 29.99,12.01" fill="#fff"/><polygon points="28.81,12.60 49.34,34.16 51.59,31.88 29.79,11.60" fill="#fff"/><polygon points="29.38,12.80 47.95,11.47 47.57,8.30 29.22,11.40" fill="#fff"/><circle cx="29.3" cy="12.1" r="1.6" fill="#fff"/></g></svg><svg class="s" style="left:121px;top:287px;" width="100" height="60" viewBox="0 0 100 60"><text x="0.5" y="21.4" font-family="Liberation Sans" font-weight="bold" font-size="24" fill="#2a5597" stroke="#2a5597" stroke-width="0.5" textLength="95" lengthAdjust="spacingAndGlyphs">РОССЕТИ</text><text x="1" y="41.4" font-family="Liberation Sans" font-weight="bold" font-size="13.5" fill="#2a5597" stroke="#2a5597" stroke-width="0.3" textLength="38" lengthAdjust="spacingAndGlyphs">ЦЕНТР</text><text x="1" y="56.9" font-family="Liberation Sans" font-weight="bold" font-size="10.5" fill="#2a5597" textLength="71" lengthAdjust="spacingAndGlyphs">Брянскэлектро</text></svg><div class="t" style="left:57px;top:412.63px;font-size:15.8px;line-height:15.8px;color:#3797f7;font-weight:bold;font-style:italic;">Модуль работы с АСКУЭ</div><div class="r" style="left:57px;top:461px;width:121px;height:21px;background:#ffffff;box-sizing:border-box;border:1px solid #c8c8c8;border-radius:2px;"></div><div class="t" style="left:60px;top:465.69px;font-size:11px;line-height:11px;color:#000;font-weight:normal;font-style:normal;">Май 2021</div><svg class="s" style="left:165px;top:469px;" width="7" height="4" viewBox="0 0 7 4"><path d="M0 0 H7 L3.5 4 Z" fill="#000"/></svg><div class="r" style="left:38px;top:564px;width:243px;height:288px;background:#ffffff;"></div><div class="r" style="left:38px;top:564px;width:243px;height:1px;background:#a0a0a0;"></div><div class="r" style="left:280px;top:564px;width:1px;height:288px;background:#a0a0a0;"></div><div class="r" style="left:49px;top:579px;width:1px;height:39px;background:transparent;background-image:linear-gradient(#808080 50%,transparent 50%);background-size:1px 2px;"></div><div class="r" style="left:49px;top:627px;width:1px;height:103px;background:transparent;background-image:linear-gradient(#808080 50%,transparent 50%);background-size:1px 2px;"></div><div class="r" style="left:49px;top:739px;width:1px;height:43px;background:transparent;background-image:linear-gradient(#808080 50%,transparent 50%);background-size:1px 2px;"></div><div class="r" style="left:69px;top:580px;width:1px;height:6px;background:transparent;background-image:linear-gradient(#808080 50%,transparent 50%);background-size:1px 2px;"></div><div class="r" style="left:87px;top:596px;width:1px;height:10px;background:transparent;background-image:linear-gradient(#808080 50%,transparent 50%);background-size:1px 2px;"></div><div class="r" style="left:69px;top:628px;width:1px;height:6px;background:transparent;background-image:linear-gradient(#808080 50%,transparent 50%);background-size:1px 2px;"></div><div class="r" style="left:69px;top:643px;width:1px;height:73px;background:transparent;background-image:linear-gradient(#808080 50%,transparent 50%);background-size:1px 2px;"></div><div class="r" style="left:87px;top:644px;width:1px;height:42px;background:transparent;background-image:linear-gradient(#808080 50%,transparent 50%);background-size:1px 2px;"></div><svg class="s" style="left:45px;top:570px;" width="9" height="9" viewBox="0 0 9 9"><rect x="0.5" y="0.5" width="8" height="8" fill="#f4f4f4" stroke="#8c8c8c"/><path d="M2 4.5 H7" stroke="#2b4a8a"/></svg><div class="r" style="left:55px;top:574px;width:5px;height:1px;background:transparent;background-image:linear-gradient(90deg,#808080 50%,transparent 50%);background-size:2px 1px;"></div><svg class="s" style="left:61px;top:566px;" width="16" height="16" viewBox="0 0 16 16"><ellipse cx="8" cy="8" rx="6.8" ry="7.2" fill="none" stroke="#a81c1c" stroke-width="1.1" stroke-dasharray="2.2 1.5"/><path d="M4.5 8.5 L8.5 4.5 L11 7 V9 L9 11 H6 L4.5 10 Z" fill="#5a5a5a"/><path d="M6 12.5 L7 9.5 L8 12 L9 9.5 L10 12.5" fill="none" stroke="#c0282a" stroke-width="1.1"/><path d="M6 15.3 H10" stroke="#a81c1c" stroke-width="1.2"/></svg><div class="t" style="left:81px;top:569.03px;font-size:10.6px;line-height:10.6px;color:#000;font-weight:normal;font-style:normal;">БР_ФОКИНСКОЕЛЕСНИЧЕСТВО</div><svg class="s" style="left:64px;top:586px;" width="9" height="9" viewBox="0 0 9 9"><rect x="0.5" y="0.5" width="8" height="8" fill="#f4f4f4" stroke="#8c8c8c"/><path d="M2 4.5 H7" stroke="#2b4a8a"/></svg><div class="r" style="left:74px;top:590px;width:5px;height:1px;background:transparent;background-image:linear-gradient(90deg,#808080 50%,transparent 50%);background-size:2px 1px;"></div><svg class="s" style="left:80px;top:583px;" width="15" height="15" viewBox="0 0 15 15"><rect x="0.5" y="0.5" width="13" height="13" fill="#fefaf2" stroke="#f1dbb8"/><circle cx="7" cy="7" r="4.2" fill="none" stroke="#6a6a6a" stroke-width="1.1" stroke-dasharray="2.5 1"/><path d="M8.8 5.2 A2.4 2.4 0 1 0 8.8 8.8" fill="none" stroke="#e0a040" stroke-width="1.1"/></svg><div class="t" style="left:99px;top:584.60px;font-size:11.1px;line-height:11.1px;color:#000;font-weight:normal;font-style:normal;">м-н Фокинское лесничество (35)</div><div class="r" style="left:88px;top:606px;width:11px;height:1px;background:transparent;background-image:linear-gradient(90deg,#808080 50%,transparent 50%);background-size:2px 1px;"></div><svg class="s" style="left:100px;top:599.5px;" width="14" height="14" viewBox="0 0 14 14"><defs><linearGradient id="lg" x1="0" y1="0" x2="1" y2="0.3"><stop offset="0" stop-color="#3a0000"/><stop offset="0.25" stop-color="#a01010"/><stop offset="0.6" stop-color="#e07a80"/><stop offset="1" stop-color="#f4b8bc"/></linearGradient></defs><path d="M0 0.5 H3.5 L5 2 H13.5 V11.5 H5 L4 13 H0.5 Z" fill="url(#lg)"/><path d="M3 2.3 H13.5" stroke="#7a1010" stroke-width="0.9"/><path d="M3 3 Q8.5 4.5 11 11.5 M5.5 3 Q10 5 13 9" stroke="#b01818" stroke-width="0.8" fill="none"/></svg><div class="t" style="left:120px;top:600.60px;font-size:11.1px;line-height:11.1px;color:#000;font-weight:normal;font-style:normal;">Физ. Лица(35)</div><svg class="s" style="left:45px;top:618px;" width="9" height="9" viewBox="0 0 9 9"><rect x="0.5" y="0.5" width="8" height="8" fill="#f4f4f4" stroke="#8c8c8c"/><path d="M2 4.5 H7" stroke="#2b4a8a"/></svg><div class="r" style="left:55px;top:622px;width:5px;height:1px;background:transparent;background-image:linear-gradient(90deg,#808080 50%,transparent 50%);background-size:2px 1px;"></div><svg class="s" style="left:61px;top:614px;" width="16" height="16" viewBox="0 0 16 16"><ellipse cx="8" cy="8" rx="6.8" ry="7.2" fill="none" stroke="#a81c1c" stroke-width="1.1" stroke-dasharray="2.2 1.5"/><path d="M4.5 8.5 L8.5 4.5 L11 7 V9 L9 11 H6 L4.5 10 Z" fill="#5a5a5a"/><path d="M6 12.5 L7 9.5 L8 12 L9 9.5 L10 12.5" fill="none" stroke="#c0282a" stroke-width="1.1"/><path d="M6 15.3 H10" stroke="#a81c1c" stroke-width="1.2"/></svg><div class="t" style="left:81px;top:617.03px;font-size:10.6px;line-height:10.6px;color:#000;font-weight:normal;font-style:normal;">СОВЕТСКИЙ</div><svg class="s" style="left:64px;top:634px;" width="9" height="9" viewBox="0 0 9 9"><rect x="0.5" y="0.5" width="8" height="8" fill="#f4f4f4" stroke="#8c8c8c"/><path d="M2 4.5 H7" stroke="#2b4a8a"/></svg><div class="r" style="left:74px;top:638px;width:5px;height:1px;background:transparent;background-image:linear-gradient(90deg,#808080 50%,transparent 50%);background-size:2px 1px;"></div><svg class="s" style="left:80px;top:631px;" width="15" height="15" viewBox="0 0 15 15"><rect x="0.5" y="0.5" width="13" height="13" fill="#fefaf2" stroke="#f1dbb8"/><circle cx="7" cy="7" r="4.2" fill="none" stroke="#6a6a6a" stroke-width="1.1" stroke-dasharray="2.5 1"/><path d="M8.8 5.2 A2.4 2.4 0 1 0 8.8 8.8" fill="none" stroke="#e0a040" stroke-width="1.1"/></svg><div class="t" style="left:99px;top:632.60px;font-size:11.1px;line-height:11.1px;color:#000;font-weight:normal;font-style:normal;">м-н Славянский ТП0147,ТП0453 (183)</div><div class="r" style="left:88px;top:654px;width:11px;height:1px;background:transparent;background-image:linear-gradient(90deg,#808080 50%,transparent 50%);background-size:2px 1px;"></div><svg class="s" style="left:100px;top:647.5px;" width="14" height="14" viewBox="0 0 14 14"><defs><linearGradient id="lg" x1="0" y1="0" x2="1" y2="0.3"><stop offset="0" stop-color="#3a0000"/><stop offset="0.25" stop-color="#a01010"/><stop offset="0.6" stop-color="#e07a80"/><stop offset="1" stop-color="#f4b8bc"/></linearGradient></defs><path d="M0 0.5 H3.5 L5 2 H13.5 V11.5 H5 L4 13 H0.5 Z" fill="url(#lg)"/><path d="M3 2.3 H13.5" stroke="#7a1010" stroke-width="0.9"/><path d="M3 3 Q8.5 4.5 11 11.5 M5.5 3 Q10 5 13 9" stroke="#b01818" stroke-width="0.8" fill="none"/></svg><div class="t" style="left:120px;top:648.60px;font-size:11.1px;line-height:11.1px;color:#000;font-weight:normal;font-style:normal;">Физ. Лица(177)</div><div class="r" style="left:88px;top:670px;width:11px;height:1px;background:transparent;background-image:linear-gradient(90deg,#808080 50%,transparent 50%);background-size:2px 1px;"></div><svg class="s" style="left:100px;top:663.5px;" width="14" height="14" viewBox="0 0 14 14"><defs><linearGradient id="lg" x1="0" y1="0" x2="1" y2="0.3"><stop offset="0" stop-color="#3a0000"/><stop offset="0.25" stop-color="#a01010"/><stop offset="0.6" stop-color="#e07a80"/><stop offset="1" stop-color="#f4b8bc"/></linearGradient></defs><path d="M0 0.5 H3.5 L5 2 H13.5 V11.5 H5 L4 13 H0.5 Z" fill="url(#lg)"/><path d="M3 2.3 H13.5" stroke="#7a1010" stroke-width="0.9"/><path d="M3 3 Q8.5 4.5 11 11.5 M5.5 3 Q10 5 13 9" stroke="#b01818" stroke-width="0.8" fill="none"/></svg><div class="t" style="left:120px;top:664.60px;font-size:11.1px;line-height:11.1px;color:#000;font-weight:normal;font-style:normal;">Юр. Лица(1)</div><div class="r" style="left:88px;top:686px;width:11px;height:1px;background:transparent;background-image:linear-gradient(90deg,#808080 50%,transparent 50%);background-size:2px 1px;"></div><svg class="s" style="left:100px;top:679.5px;" width="14" height="14" viewBox="0 0 14 14"><defs><linearGradient id="lg" x1="0" y1="0" x2="1" y2="0.3"><stop offset="0" stop-color="#3a0000"/><stop offset="0.25" stop-color="#a01010"/><stop offset="0.6" stop-color="#e07a80"/><stop offset="1" stop-color="#f4b8bc"/></linearGradient></defs><path d="M0 0.5 H3.5 L5 2 H13.5 V11.5 H5 L4 13 H0.5 Z" fill="url(#lg)"/><path d="M3 2.3 H13.5" stroke="#7a1010" stroke-width="0.9"/><path d="M3 3 Q8.5 4.5 11 11.5 M5.5 3 Q10 5 13 9" stroke="#b01818" stroke-width="0.8" fill="none"/></svg><div class="t" style="left:120px;top:680.60px;font-size:11.1px;line-height:11.1px;color:#000;font-weight:normal;font-style:normal;">Не найдены в ERP(5)</div><svg class="s" style="left:64px;top:698px;" width="9" height="9" viewBox="0 0 9 9"><rect x="0.5" y="0.5" width="8" height="8" fill="#f4f4f4" stroke="#8c8c8c"/><path d="M2 4.5 H7" stroke="#2b4a8a"/><path d="M4.5 2 V7" stroke="#2b4a8a"/></svg><div class="r" style="left:74px;top:702px;width:5px;height:1px;background:transparent;background-image:linear-gradient(90deg,#808080 50%,transparent 50%);background-size:2px 1px;"></div><svg class="s" style="left:80px;top:695px;" width="15" height="15" viewBox="0 0 15 15"><rect x="0.5" y="0.5" width="13" height="13" fill="#fefaf2" stroke="#f1dbb8"/><circle cx="7" cy="7" r="4.2" fill="none" stroke="#6a6a6a" stroke-width="1.1" stroke-dasharray="2.5 1"/><path d="M8.8 5.2 A2.4 2.4 0 1 0 8.8 8.8" fill="none" stroke="#e0a040" stroke-width="1.1"/></svg><div class="t" style="left:99px;top:696.60px;font-size:11.1px;line-height:11.1px;color:#000;font-weight:normal;font-style:normal;">Дормаш ТП0339 (144)</div><svg class="s" style="left:64px;top:714px;" width="9" height="9" viewBox="0 0 9 9"><rect x="0.5" y="0.5" width="8" height="8" fill="#f4f4f4" stroke="#8c8c8c"/><path d="M2 4.5 H7" stroke="#2b4a8a"/><path d="M4.5 2 V7" stroke="#2b4a8a"/></svg><div class="r" style="left:74px;top:718px;width:5px;height:1px;background:transparent;background-image:linear-gradient(90deg,#808080 50%,transparent 50%);background-size:2px 1px;"></div><svg class="s" style="left:80px;top:711px;" width="15" height="15" viewBox="0 0 15 15"><rect x="0.5" y="0.5" width="13" height="13" fill="#fefaf2" stroke="#f1dbb8"/><circle cx="7" cy="7" r="4.2" fill="none" stroke="#6a6a6a" stroke-width="1.1" stroke-dasharray="2.5 1"/><path d="M8.8 5.2 A2.4 2.4 0 1 0 8.8 8.8" fill="none" stroke="#e0a040" stroke-width="1.1"/></svg><div class="t" style="left:99px;top:712.60px;font-size:11.1px;line-height:11.1px;color:#000;font-weight:normal;font-style:normal;">Карачиж ТП0348,0064,0078,0080 (39)</div><svg class="s" style="left:45px;top:730px;" width="9" height="9" viewBox="0 0 9 9"><rect x="0.5" y="0.5" width="8" height="8" fill="#f4f4f4" stroke="#8c8c8c"/><path d="M2 4.5 H7" stroke="#2b4a8a"/><path d="M4.5 2 V7" stroke="#2b4a8a"/></svg><div class="r" style="left:55px;top:734px;width:5px;height:1px;background:transparent;background-image:linear-gradient(90deg,#808080 50%,transparent 50%);background-size:2px 1px;"></div><svg class="s" style="left:61px;top:726px;" width="16" height="16" viewBox="0 0 16 16"><ellipse cx="8" cy="8" rx="6.8" ry="7.2" fill="none" stroke="#a81c1c" stroke-width="1.1" stroke-dasharray="2.2 1.5"/><path d="M4.5 8.5 L8.5 4.5 L11 7 V9 L9 11 H6 L4.5 10 Z" fill="#5a5a5a"/><path d="M6 12.5 L7 9.5 L8 12 L9 9.5 L10 12.5" fill="none" stroke="#c0282a" stroke-width="1.1"/><path d="M6 15.3 H10" stroke="#a81c1c" stroke-width="1.2"/></svg><div class="t" style="left:81px;top:729.03px;font-size:10.6px;line-height:10.6px;color:#000;font-weight:normal;font-style:normal;">БЕЖИЦКИЙ</div><svg class="s" style="left:45px;top:746px;" width="9" height="9" viewBox="0 0 9 9"><rect x="0.5" y="0.5" width="8" height="8" fill="#f4f4f4" stroke="#8c8c8c"/><path d="M2 4.5 H7" stroke="#2b4a8a"/><path d="M4.5 2 V7" stroke="#2b4a8a"/></svg><div class="r" style="left:55px;top:750px;width:5px;height:1px;background:transparent;background-image:linear-gradient(90deg,#808080 50%,transparent 50%);background-size:2px 1px;"></div><svg class="s" style="left:61px;top:742px;" width="16" height="16" viewBox="0 0 16 16"><ellipse cx="8" cy="8" rx="6.8" ry="7.2" fill="none" stroke="#a81c1c" stroke-width="1.1" stroke-dasharray="2.2 1.5"/><path d="M4.5 8.5 L8.5 4.5 L11 7 V9 L9 11 H6 L4.5 10 Z" fill="#5a5a5a"/><path d="M6 12.5 L7 9.5 L8 12 L9 9.5 L10 12.5" fill="none" stroke="#c0282a" stroke-width="1.1"/><path d="M6 15.3 H10" stroke="#a81c1c" stroke-width="1.2"/></svg><div class="t" style="left:81px;top:745.03px;font-size:10.6px;line-height:10.6px;color:#000;font-weight:normal;font-style:normal;">ФОКИНСКИЙ</div><svg class="s" style="left:45px;top:762px;" width="9" height="9" viewBox="0 0 9 9"><rect x="0.5" y="0.5" width="8" height="8" fill="#f4f4f4" stroke="#8c8c8c"/><path d="M2 4.5 H7" stroke="#2b4a8a"/><path d="M4.5 2 V7" stroke="#2b4a8a"/></svg><div class="r" style="left:55px;top:766px;width:5px;height:1px;background:transparent;background-image:linear-gradient(90deg,#808080 50%,transparent 50%);background-size:2px 1px;"></div><svg class="s" style="left:61px;top:758px;" width="16" height="16" viewBox="0 0 16 16"><ellipse cx="8" cy="8" rx="6.8" ry="7.2" fill="none" stroke="#a81c1c" stroke-width="1.1" stroke-dasharray="2.2 1.5"/><path d="M4.5 8.5 L8.5 4.5 L11 7 V9 L9 11 H6 L4.5 10 Z" fill="#5a5a5a"/><path d="M6 12.5 L7 9.5 L8 12 L9 9.5 L10 12.5" fill="none" stroke="#c0282a" stroke-width="1.1"/><path d="M6 15.3 H10" stroke="#a81c1c" stroke-width="1.2"/></svg><div class="t" style="left:81px;top:761.03px;font-size:10.6px;line-height:10.6px;color:#000;font-weight:normal;font-style:normal;">БЕЛЫЕБЕРЕГА</div><svg class="s" style="left:45px;top:778px;" width="9" height="9" viewBox="0 0 9 9"><rect x="0.5" y="0.5" width="8" height="8" fill="#f4f4f4" stroke="#8c8c8c"/><path d="M2 4.5 H7" stroke="#2b4a8a"/><path d="M4.5 2 V7" stroke="#2b4a8a"/></svg><div class="r" style="left:55px;top:782px;width:5px;height:1px;background:transparent;background-image:linear-gradient(90deg,#808080 50%,transparent 50%);background-size:2px 1px;"></div><svg class="s" style="left:61px;top:774px;" width="16" height="16" viewBox="0 0 16 16"><ellipse cx="8" cy="8" rx="6.8" ry="7.2" fill="none" stroke="#a81c1c" stroke-width="1.1" stroke-dasharray="2.2 1.5"/><path d="M4.5 8.5 L8.5 4.5 L11 7 V9 L9 11 H6 L4.5 10 Z" fill="#5a5a5a"/><path d="M6 12.5 L7 9.5 L8 12 L9 9.5 L10 12.5" fill="none" stroke="#c0282a" stroke-width="1.1"/><path d="M6 15.3 H10" stroke="#a81c1c" stroke-width="1.2"/></svg><div class="t" style="left:81px;top:777.03px;font-size:10.6px;line-height:10.6px;color:#000;font-weight:normal;font-style:normal;">ВОЛОДАРСКИЙ</div><div class="r" style="left:281px;top:564px;width:15px;height:288px;background:#fbfbfc;"></div><div class="r" style="left:38px;top:839px;width:242px;height:13px;background:#f0f0f0;"></div><div class="r" style="left:56px;top:839px;width:191px;height:13px;background:#dcdcdc;box-sizing:border-box;border:1px solid #9a9a9a;border-radius:2px;background:linear-gradient(#f4f4f4,#e6e6e6 50%,#d0d0d0);"></div><svg class="s" style="left:147px;top:842px;" width="8" height="7" viewBox="0 0 8 7"><path d="M1 0 V7 M3.5 0 V7 M6 0 V7" stroke="#555" stroke-width="1"/></svg><svg class="s" style="left:44px;top:842px;" width="4" height="7" viewBox="0 0 4 7"><path d="M4 0 V7 L0 3.5 Z" fill="#333"/></svg><svg class="s" style="left:269px;top:842px;" width="4" height="7" viewBox="0 0 4 7"><path d="M0 0 V7 L4 3.5 Z" fill="#333"/></svg><div class="r" style="left:296px;top:584px;width:209px;height:268px;background:#ffffff;box-sizing:border-box;border:1px solid #a0a0a0;border-bottom:none;"></div><div class="r" style="left:348px;top:566px;width:114px;height:19px;background:#e0e0e0;box-sizing:border-box;border:1px solid #a0a0a0;border-bottom:none;background:linear-gradient(#f2f2f2,#e6e6e6 50%,#dcdcdc);"></div><div class="r" style="left:296px;top:564px;width:53px;height:21px;background:#ffffff;box-sizing:border-box;border:1px solid #a0a0a0;border-bottom:none;"></div><div class="r" style="left:297px;top:584px;width:51px;height:1px;background:#ffffff;"></div><div class="t" style="left:304px;top:568.69px;font-size:11px;line-height:11px;color:#000;font-weight:normal;font-style:normal;">Отчеты</div><div class="t" style="left:353px;top:570.52px;font-size:11.2px;line-height:11.2px;color:#000;font-weight:normal;font-style:normal;">Прогрузка объемов</div><div class="r" style="left:319px;top:611px;width:115px;height:48px;background:#e0e0e0;box-sizing:border-box;border:1px solid #707070;border-radius:3px;background:linear-gradient(#f2f2f2 0%,#ebebeb 50%,#dddddd 51%,#cfcfcf 100%);"></div><div class="t" style="left:316.5px;width:120px;text-align:center;top:622.69px;font-size:11px;line-height:11px;color:#000;font-weight:normal;font-style:normal;">Отчет о расходе за</div><div class="t" style="left:316.5px;width:120px;text-align:center;top:637.69px;font-size:11px;line-height:11px;color:#000;font-weight:normal;font-style:normal;">месяц</div><div class="r" style="left:576px;top:217px;width:1344px;height:635px;background:#ffffff;"></div><div class="r" style="left:576px;top:198px;width:1346px;height:19px;background:#e6e6e6;"></div><div class="r" style="left:576px;top:217px;width:25px;height:635px;background:#e6e6e6;"></div><div class="r" style="left:602px;top:198px;width:546px;height:19px;background:#d2d2d2;"></div><div class="r" style="left:576px;top:297px;width:25px;height:20px;background:#d2d2d2;"></div><div class="r" style="left:575px;top:200px;width:1px;height:652px;background:#ababab;"></div><div class="r" style="left:602px;top:237px;width:1318px;height:1px;background:#d4d4d4;"></div><div class="r" style="left:576px;top:237px;width:25px;height:1px;background:#ababab;"></div><div class="r" style="left:602px;top:257px;width:1318px;height:1px;background:#d4d4d4;"></div><div class="r" style="left:576px;top:257px;width:25px;height:1px;background:#ababab;"></div><div class="r" style="left:602px;top:277px;width:1318px;height:1px;background:#d4d4d4;"></div><div class="r" style="left:576px;top:277px;width:25px;height:1px;background:#ababab;"></div><div class="r" style="left:602px;top:297px;width:1318px;height:1px;background:#d4d4d4;"></div><div class="r" style="left:576px;top:297px;width:25px;height:1px;background:#ababab;"></div><div class="r" style="left:602px;top:317px;width:1318px;height:1px;background:#d4d4d4;"></div><div class="r" style="left:576px;top:317px;width:25px;height:1px;background:#ababab;"></div><div class="r" style="left:602px;top:337px;width:1318px;height:1px;background:#d4d4d4;"></div><div class="r" style="left:576px;top:337px;width:25px;height:1px;background:#ababab;"></div><div class="r" style="left:602px;top:357px;width:1318px;height:1px;background:#d4d4d4;"></div><div class="r" style="left:576px;top:357px;width:25px;height:1px;background:#ababab;"></div><div class="r" style="left:602px;top:377px;width:1318px;height:1px;background:#d4d4d4;"></div><div class="r" style="left:576px;top:377px;width:25px;height:1px;background:#ababab;"></div><div class="r" style="left:602px;top:397px;width:1318px;height:1px;background:#d4d4d4;"></div><div class="r" style="left:576px;top:397px;width:25px;height:1px;background:#ababab;"></div><div class="r" style="left:602px;top:417px;width:1318px;height:1px;background:#d4d4d4;"></div><div class="r" style="left:576px;top:417px;width:25px;height:1px;background:#ababab;"></div><div class="r" style="left:602px;top:437px;width:1318px;height:1px;background:#d4d4d4;"></div><div class="r" style="left:576px;top:437px;width:25px;height:1px;background:#ababab;"></div><div class="r" style="left:602px;top:457px;width:1318px;height:1px;background:#d4d4d4;"></div><div class="r" style="left:576px;top:457px;width:25px;height:1px;background:#ababab;"></div><div class="r" style="left:602px;top:477px;width:1318px;height:1px;background:#d4d4d4;"></div><div class="r" style="left:576px;top:477px;width:25px;height:1px;background:#ababab;"></div><div class="r" style="left:602px;top:497px;width:1318px;height:1px;background:#d4d4d4;"></div><div class="r" style="left:576px;top:497px;width:25px;height:1px;background:#ababab;"></div><div class="r" style="left:602px;top:517px;width:1318px;height:1px;background:#d4d4d4;"></div><div class="r" style="left:576px;top:517px;width:25px;height:1px;background:#ababab;"></div><div class="r" style="left:602px;top:537px;width:1318px;height:1px;background:#d4d4d4;"></div><div class="r" style="left:576px;top:537px;width:25px;height:1px;background:#ababab;"></div><div class="r" style="left:602px;top:557px;width:1318px;height:1px;background:#d4d4d4;"></div><div class="r" style="left:576px;top:557px;width:25px;height:1px;background:#ababab;"></div><div class="r" style="left:602px;top:577px;width:1318px;height:1px;background:#d4d4d4;"></div><div class="r" style="left:576px;top:577px;width:25px;height:1px;background:#ababab;"></div><div class="r" style="left:602px;top:597px;width:1318px;height:1px;background:#d4d4d4;"></div><div class="r" style="left:576px;top:597px;width:25px;height:1px;background:#ababab;"></div><div class="r" style="left:602px;top:617px;width:1318px;height:1px;background:#d4d4d4;"></div><div class="r" style="left:576px;top:617px;width:25px;height:1px;background:#ababab;"></div><div class="r" style="left:602px;top:637px;width:1318px;height:1px;background:#d4d4d4;"></div><div class="r" style="left:576px;top:637px;width:25px;height:1px;background:#ababab;"></div><div class="r" style="left:602px;top:657px;width:1318px;height:1px;background:#d4d4d4;"></div><div class="r" style="left:576px;top:657px;width:25px;height:1px;background:#ababab;"></div><div class="r" style="left:602px;top:677px;width:1318px;height:1px;background:#d4d4d4;"></div><div class="r" style="left:576px;top:677px;width:25px;height:1px;background:#ababab;"></div><div class="r" style="left:602px;top:697px;width:1318px;height:1px;background:#d4d4d4;"></div><div class="r" style="left:576px;top:697px;width:25px;height:1px;background:#ababab;"></div><div class="r" style="left:602px;top:717px;width:1318px;height:1px;background:#d4d4d4;"></div><div class="r" style="left:576px;top:717px;width:25px;height:1px;background:#ababab;"></div><div class="r" style="left:602px;top:737px;width:1318px;height:1px;background:#d4d4d4;"></div><div class="r" style="left:576px;top:737px;width:25px;height:1px;background:#ababab;"></div><div class="r" style="left:602px;top:757px;width:1318px;height:1px;background:#d4d4d4;"></div><div class="r" style="left:576px;top:757px;width:25px;height:1px;background:#ababab;"></div><div class="r" style="left:602px;top:777px;width:1318px;height:1px;background:#d4d4d4;"></div><div class="r" style="left:576px;top:777px;width:25px;height:1px;background:#ababab;"></div><div class="r" style="left:602px;top:797px;width:1318px;height:1px;background:#d4d4d4;"></div><div class="r" style="left:576px;top:797px;width:25px;height:1px;background:#ababab;"></div><div class="r" style="left:602px;top:817px;width:1318px;height:1px;background:#d4d4d4;"></div><div class="r" style="left:576px;top:817px;width:25px;height:1px;background:#ababab;"></div><div class="r" style="left:602px;top:837px;width:1318px;height:1px;background:#d4d4d4;"></div><div class="r" style="left:576px;top:837px;width:25px;height:1px;background:#ababab;"></div><div class="r" style="left:602px;top:857px;width:1318px;height:1px;background:#d4d4d4;"></div><div class="r" style="left:576px;top:857px;width:25px;height:1px;background:#ababab;"></div><div class="r" style="left:1148px;top:217px;width:1px;height:635px;background:#d4d4d4;"></div><div class="r" style="left:1148px;top:198px;width:1px;height:19px;background:#ababab;"></div><div class="t" style="left:834.5px;width:80px;text-align:center;top:202.42px;font-size:12.5px;line-height:12.5px;color:#217346;font-weight:normal;font-style:normal;">A</div><div class="r" style="left:1250px;top:217px;width:1px;height:635px;background:#d4d4d4;"></div><div class="r" style="left:1250px;top:198px;width:1px;height:19px;background:#ababab;"></div><div class="t" style="left:1159.0px;width:80px;text-align:center;top:202.42px;font-size:12.5px;line-height:12.5px;color:#262626;font-weight:normal;font-style:normal;">B</div><div class="r" style="left:1370px;top:217px;width:1px;height:635px;background:#d4d4d4;"></div><div class="r" style="left:1370px;top:198px;width:1px;height:19px;background:#ababab;"></div><div class="t" style="left:1270.0px;width:80px;text-align:center;top:202.42px;font-size:12.5px;line-height:12.5px;color:#262626;font-weight:normal;font-style:normal;">C</div><div class="r" style="left:1473px;top:217px;width:1px;height:635px;background:#d4d4d4;"></div><div class="r" style="left:1473px;top:198px;width:1px;height:19px;background:#ababab;"></div><div class="t" style="left:1381.5px;width:80px;text-align:center;top:202.42px;font-size:12.5px;line-height:12.5px;color:#262626;font-weight:normal;font-style:normal;">D</div><div class="r" style="left:1568px;top:217px;width:1px;height:635px;background:#d4d4d4;"></div><div class="r" style="left:1568px;top:198px;width:1px;height:19px;background:#ababab;"></div><div class="t" style="left:1480.5px;width:80px;text-align:center;top:202.42px;font-size:12.5px;line-height:12.5px;color:#262626;font-weight:normal;font-style:normal;">E</div><div class="r" style="left:1632px;top:217px;width:1px;height:635px;background:#d4d4d4;"></div><div class="r" style="left:1632px;top:198px;width:1px;height:19px;background:#ababab;"></div><div class="t" style="left:1560.0px;width:80px;text-align:center;top:202.42px;font-size:12.5px;line-height:12.5px;color:#262626;font-weight:normal;font-style:normal;">F</div><div class="r" style="left:1696px;top:217px;width:1px;height:635px;background:#d4d4d4;"></div><div class="r" style="left:1696px;top:198px;width:1px;height:19px;background:#ababab;"></div><div class="t" style="left:1624.0px;width:80px;text-align:center;top:202.42px;font-size:12.5px;line-height:12.5px;color:#262626;font-weight:normal;font-style:normal;">G</div><div class="r" style="left:1760px;top:217px;width:1px;height:635px;background:#d4d4d4;"></div><div class="r" style="left:1760px;top:198px;width:1px;height:19px;background:#ababab;"></div><div class="t" style="left:1688.0px;width:80px;text-align:center;top:202.42px;font-size:12.5px;line-height:12.5px;color:#262626;font-weight:normal;font-style:normal;">H</div><div class="r" style="left:1824px;top:217px;width:1px;height:635px;background:#d4d4d4;"></div><div class="r" style="left:1824px;top:198px;width:1px;height:19px;background:#ababab;"></div><div class="t" style="left:1752.0px;width:80px;text-align:center;top:202.42px;font-size:12.5px;line-height:12.5px;color:#262626;font-weight:normal;font-style:normal;">I</div><div class="r" style="left:1888px;top:217px;width:1px;height:635px;background:#d4d4d4;"></div><div class="r" style="left:1888px;top:198px;width:1px;height:19px;background:#ababab;"></div><div class="t" style="left:1816.0px;width:80px;text-align:center;top:202.42px;font-size:12.5px;line-height:12.5px;color:#262626;font-weight:normal;font-style:normal;">J</div><div class="t" style="left:1883.0px;width:80px;text-align:center;top:202.42px;font-size:12.5px;line-height:12.5px;color:#262626;font-weight:normal;font-style:normal;">K</div><div class="r" style="left:576px;top:217px;width:1344px;height:1px;background:#ababab;"></div><div class="r" style="left:601px;top:198px;width:1px;height:654px;background:#ababab;"></div><div class="r" style="left:1919px;top:217px;width:1px;height:635px;background:#ababab;"></div><div class="r" style="left:602px;top:216px;width:547px;height:2px;background:#217346;"></div><svg class="s" style="left:586px;top:202px;" width="12" height="12" viewBox="0 0 12 12"><path d="M12 0 L12 12 L0 12 Z" fill="#b4b4b4"/></svg><div class="t" style="left:574.0px;width:30px;text-align:center;top:221.57px;font-size:13.5px;line-height:13.5px;color:#262626;font-weight:normal;font-style:normal;">1</div><div class="t" style="left:574.0px;width:30px;text-align:center;top:241.57px;font-size:13.5px;line-height:13.5px;color:#262626;font-weight:normal;font-style:normal;">2</div><div class="t" style="left:574.0px;width:30px;text-align:center;top:261.57px;font-size:13.5px;line-height:13.5px;color:#262626;font-weight:normal;font-style:normal;">3</div><div class="t" style="left:574.0px;width:30px;text-align:center;top:281.57px;font-size:13.5px;line-height:13.5px;color:#262626;font-weight:normal;font-style:normal;">4</div><div class="t" style="left:574.0px;width:30px;text-align:center;top:301.57px;font-size:13.5px;line-height:13.5px;color:#217346;font-weight:normal;font-style:normal;">5</div><div class="t" style="left:574.0px;width:30px;text-align:center;top:321.57px;font-size:13.5px;line-height:13.5px;color:#262626;font-weight:normal;font-style:normal;">6</div><div class="t" style="left:574.0px;width:30px;text-align:center;top:341.57px;font-size:13.5px;line-height:13.5px;color:#262626;font-weight:normal;font-style:normal;">7</div><div class="t" style="left:574.0px;width:30px;text-align:center;top:361.57px;font-size:13.5px;line-height:13.5px;color:#262626;font-weight:normal;font-style:normal;">8</div><div class="t" style="left:574.0px;width:30px;text-align:center;top:381.57px;font-size:13.5px;line-height:13.5px;color:#262626;font-weight:normal;font-style:normal;">9</div><div class="t" style="left:574.0px;width:30px;text-align:center;top:401.57px;font-size:13.5px;line-height:13.5px;color:#262626;font-weight:normal;font-style:normal;">10</div><div class="t" style="left:574.0px;width:30px;text-align:center;top:421.57px;font-size:13.5px;line-height:13.5px;color:#262626;font-weight:normal;font-style:normal;">11</div><div class="t" style="left:574.0px;width:30px;text-align:center;top:441.57px;font-size:13.5px;line-height:13.5px;color:#262626;font-weight:normal;font-style:normal;">12</div><div class="t" style="left:574.0px;width:30px;text-align:center;top:461.57px;font-size:13.5px;line-height:13.5px;color:#262626;font-weight:normal;font-style:normal;">13</div><div class="t" style="left:574.0px;width:30px;text-align:center;top:481.57px;font-size:13.5px;line-height:13.5px;color:#262626;font-weight:normal;font-style:normal;">14</div><div class="t" style="left:574.0px;width:30px;text-align:center;top:501.57px;font-size:13.5px;line-height:13.5px;color:#262626;font-weight:normal;font-style:normal;">15</div><div class="t" style="left:574.0px;width:30px;text-align:center;top:521.57px;font-size:13.5px;line-height:13.5px;color:#262626;font-weight:normal;font-style:normal;">16</div><div class="t" style="left:574.0px;width:30px;text-align:center;top:541.57px;font-size:13.5px;line-height:13.5px;color:#262626;font-weight:normal;font-style:normal;">17</div><div class="t" style="left:574.0px;width:30px;text-align:center;top:561.57px;font-size:13.5px;line-height:13.5px;color:#262626;font-weight:normal;font-style:normal;">18</div><div class="t" style="left:574.0px;width:30px;text-align:center;top:581.57px;font-size:13.5px;line-height:13.5px;color:#262626;font-weight:normal;font-style:normal;">19</div><div class="t" style="left:574.0px;width:30px;text-align:center;top:601.57px;font-size:13.5px;line-height:13.5px;color:#262626;font-weight:normal;font-style:normal;">20</div><div class="t" style="left:574.0px;width:30px;text-align:center;top:621.57px;font-size:13.5px;line-height:13.5px;color:#262626;font-weight:normal;font-style:normal;">21</div><div class="t" style="left:574.0px;width:30px;text-align:center;top:641.57px;font-size:13.5px;line-height:13.5px;color:#262626;font-weight:normal;font-style:normal;">22</div><div class="t" style="left:574.0px;width:30px;text-align:center;top:661.57px;font-size:13.5px;line-height:13.5px;color:#262626;font-weight:normal;font-style:normal;">23</div><div class="t" style="left:574.0px;width:30px;text-align:center;top:681.57px;font-size:13.5px;line-height:13.5px;color:#262626;font-weight:normal;font-style:normal;">24</div><div class="t" style="left:574.0px;width:30px;text-align:center;top:701.57px;font-size:13.5px;line-height:13.5px;color:#262626;font-weight:normal;font-style:normal;">25</div><div class="t" style="left:574.0px;width:30px;text-align:center;top:721.57px;font-size:13.5px;line-height:13.5px;color:#262626;font-weight:normal;font-style:normal;">26</div><div class="t" style="left:574.0px;width:30px;text-align:center;top:741.57px;font-size:13.5px;line-height:13.5px;color:#262626;font-weight:normal;font-style:normal;">27</div><div class="t" style="left:574.0px;width:30px;text-align:center;top:761.57px;font-size:13.5px;line-height:13.5px;color:#262626;font-weight:normal;font-style:normal;">28</div><div class="t" style="left:574.0px;width:30px;text-align:center;top:781.57px;font-size:13.5px;line-height:13.5px;color:#262626;font-weight:normal;font-style:normal;">29</div><div class="t" style="left:574.0px;width:30px;text-align:center;top:801.57px;font-size:13.5px;line-height:13.5px;color:#262626;font-weight:normal;font-style:normal;">30</div><div class="t" style="left:574.0px;width:30px;text-align:center;top:821.57px;font-size:13.5px;line-height:13.5px;color:#262626;font-weight:normal;font-style:normal;">31</div><div class="t" style="left:574.0px;width:30px;text-align:center;top:841.57px;font-size:13.5px;line-height:13.5px;color:#262626;font-weight:normal;font-style:normal;">32</div><div class="t" style="left:604px;top:223.25px;font-size:12.7px;line-height:12.7px;color:#c65911;font-weight:bold;font-style:normal;">м-н Славянский ТП0147,ТП0453 (183) Физ. Лица(177) Май 2021</div><div class="t" style="left:1373px;top:223.25px;font-size:12.7px;line-height:12.7px;color:#c65911;font-weight:bold;font-style:normal;">Строк по запросу: 177</div><div class="t" style="left:604px;top:242.12px;font-size:12.85px;line-height:12.85px;color:#33cc33;font-weight:bold;font-style:italic;">Адрес</div><div class="t" style="left:1151px;top:242.12px;font-size:12.85px;line-height:12.85px;color:#33cc33;font-weight:bold;font-style:italic;">Лицевой счет</div><div class="t" style="left:1253px;top:242.12px;font-size:12.85px;line-height:12.85px;color:#33cc33;font-weight:bold;font-style:italic;">Номер счетчика</div><div class="t" style="left:1373px;top:242.12px;font-size:12.85px;line-height:12.85px;color:#33cc33;font-weight:bold;font-style:italic;">Объемы в ERP</div><div class="t" style="left:1476px;top:242.12px;font-size:12.85px;line-height:12.85px;color:#33cc33;font-weight:bold;font-style:italic;">Объемы у ГП</div><div class="t" style="left:604px;top:261.61px;font-size:13.45px;line-height:13.45px;color:#000;font-weight:normal;font-style:normal;">Брянский р-н., Супонево с., 4-й Славянский пер., д. 9</div><div class="t" style="right:674px;top:262.50px;font-size:12.4px;line-height:12.4px;color:#000;font-weight:normal;font-style:normal;">1030000995</div><div class="t" style="right:554px;top:263.03px;font-size:12.6px;line-height:12.6px;color:#000;font-weight:normal;font-style:normal;">10878110950361</div><div class="t" style="right:451px;top:263.33px;font-size:12.6px;line-height:12.6px;color:#000;font-weight:normal;font-style:normal;">103</div><div class="t" style="right:356px;top:263.33px;font-size:12.6px;line-height:12.6px;color:#000;font-weight:normal;font-style:normal;">103</div><div class="t" style="left:604px;top:281.61px;font-size:13.45px;line-height:13.45px;color:#000;font-weight:normal;font-style:normal;">Брянский р-н., Супонево с., Славянская ул., д. 15</div><div class="t" style="right:674px;top:282.50px;font-size:12.4px;line-height:12.4px;color:#000;font-weight:normal;font-style:normal;">1030097743</div><div class="t" style="right:554px;top:283.03px;font-size:12.6px;line-height:12.6px;color:#000;font-weight:normal;font-style:normal;">10878109949253</div><div class="t" style="right:451px;top:283.33px;font-size:12.6px;line-height:12.6px;color:#000;font-weight:normal;font-style:normal;">221</div><div class="t" style="right:356px;top:283.33px;font-size:12.6px;line-height:12.6px;color:#000;font-weight:normal;font-style:normal;">221</div><div class="t" style="left:604px;top:301.61px;font-size:13.45px;line-height:13.45px;color:#000;font-weight:normal;font-style:normal;">Брянский р-н., Супонево с., Дачная ул., д. 31</div><div class="t" style="right:674px;top:302.50px;font-size:12.4px;line-height:12.4px;color:#000;font-weight:normal;font-style:normal;">1030002040</div><div class="t" style="right:554px;top:303.03px;font-size:12.6px;line-height:12.6px;color:#000;font-weight:normal;font-style:normal;">11293113212301</div><div class="t" style="right:451px;top:303.33px;font-size:12.6px;line-height:12.6px;color:#000;font-weight:normal;font-style:normal;">274</div><div class="t" style="right:356px;top:303.33px;font-size:12.6px;line-height:12.6px;color:#000;font-weight:normal;font-style:normal;">274</div><div class="t" style="left:604px;top:321.61px;font-size:13.45px;line-height:13.45px;color:#000;font-weight:normal;font-style:normal;">Брянский р-н., Супонево с., 4-й Славянский пер., д. 15</div><div class="t" style="right:674px;top:322.50px;font-size:12.4px;line-height:12.4px;color:#000;font-weight:normal;font-style:normal;">1030096223</div><div class="t" style="right:554px;top:323.03px;font-size:12.6px;line-height:12.6px;color:#000;font-weight:normal;font-style:normal;">10878110949444</div><div class="t" style="right:451px;top:323.33px;font-size:12.6px;line-height:12.6px;color:#000;font-weight:normal;font-style:normal;">320</div><div class="t" style="right:356px;top:323.33px;font-size:12.6px;line-height:12.6px;color:#000;font-weight:normal;font-style:normal;">320</div><div class="t" style="left:604px;top:341.61px;font-size:13.45px;line-height:13.45px;color:#000;font-weight:normal;font-style:normal;">Брянский р-н., Супонево с., Дачная ул., д. 10</div><div class="t" style="right:674px;top:342.50px;font-size:12.4px;line-height:12.4px;color:#000;font-weight:normal;font-style:normal;">1030095662</div><div class="t" style="right:554px;top:343.03px;font-size:12.6px;line-height:12.6px;color:#000;font-weight:normal;font-style:normal;">11293105140172</div><div class="t" style="right:451px;top:343.33px;font-size:12.6px;line-height:12.6px;color:#000;font-weight:normal;font-style:normal;">155</div><div class="t" style="right:356px;top:343.33px;font-size:12.6px;line-height:12.6px;color:#000;font-weight:normal;font-style:normal;">155</div><div class="t" style="left:604px;top:361.61px;font-size:13.45px;line-height:13.45px;color:#000;font-weight:normal;font-style:normal;">Брянский р-н., Супонево с., Зеленая ул., д. 5/Б</div><div class="t" style="right:674px;top:362.50px;font-size:12.4px;line-height:12.4px;color:#000;font-weight:normal;font-style:normal;">1030000082</div><div class="t" style="right:554px;top:363.03px;font-size:12.6px;line-height:12.6px;color:#000;font-weight:normal;font-style:normal;">10878117811862</div><div class="t" style="right:451px;top:363.33px;font-size:12.6px;line-height:12.6px;color:#000;font-weight:normal;font-style:normal;">259</div><div class="t" style="right:356px;top:363.33px;font-size:12.6px;line-height:12.6px;color:#000;font-weight:normal;font-style:normal;">259</div><div class="t" style="left:604px;top:381.61px;font-size:13.45px;line-height:13.45px;color:#000;font-weight:normal;font-style:normal;">Брянский р-н., Супонево с., 3-й Славянский пер., д. 2</div><div class="t" style="right:674px;top:382.50px;font-size:12.4px;line-height:12.4px;color:#000;font-weight:normal;font-style:normal;">1030095619</div><div class="t" style="right:554px;top:383.03px;font-size:12.6px;line-height:12.6px;color:#000;font-weight:normal;font-style:normal;">11293105137610</div><div class="t" style="right:451px;top:383.33px;font-size:12.6px;line-height:12.6px;color:#000;font-weight:normal;font-style:normal;">8</div><div class="t" style="right:356px;top:383.33px;font-size:12.6px;line-height:12.6px;color:#000;font-weight:normal;font-style:normal;">8</div><div class="t" style="left:604px;top:401.61px;font-size:13.45px;line-height:13.45px;color:#000;font-weight:normal;font-style:normal;">241050, Брянская обл, Брянск г, Станке Димитрова пр-кт, дом № 106М</div><div class="t" style="right:674px;top:402.50px;font-size:12.4px;line-height:12.4px;color:#000;font-weight:normal;font-style:normal;">1030200448</div><div class="t" style="right:554px;top:403.03px;font-size:12.6px;line-height:12.6px;color:#000;font-weight:normal;font-style:normal;">11293119250456</div><div class="t" style="right:451px;top:403.33px;font-size:12.6px;line-height:12.6px;color:#000;font-weight:normal;font-style:normal;">79</div><div class="t" style="right:356px;top:403.33px;font-size:12.6px;line-height:12.6px;color:#000;font-weight:normal;font-style:normal;">79</div><div class="t" style="left:604px;top:421.61px;font-size:13.45px;line-height:13.45px;color:#000;font-weight:normal;font-style:normal;">Брянский р-н., Супонево с., ГСК Автолюбитель-2 тер., д. 20</div><div class="t" style="right:674px;top:422.50px;font-size:12.4px;line-height:12.4px;color:#000;font-weight:normal;font-style:normal;">1030004178</div><div class="t" style="right:554px;top:423.03px;font-size:12.6px;line-height:12.6px;color:#000;font-weight:normal;font-style:normal;">11293119237648</div><div class="t" style="right:451px;top:423.33px;font-size:12.6px;line-height:12.6px;color:#000;font-weight:normal;font-style:normal;">40</div><div class="t" style="right:356px;top:423.33px;font-size:12.6px;line-height:12.6px;color:#000;font-weight:normal;font-style:normal;">40</div><div class="t" style="left:604px;top:441.61px;font-size:13.45px;line-height:13.45px;color:#000;font-weight:normal;font-style:normal;">Брянский р-н., Супонево с., Дачная ул., д. 15</div><div class="t" style="right:674px;top:442.50px;font-size:12.4px;line-height:12.4px;color:#000;font-weight:normal;font-style:normal;">1030002349</div><div class="t" style="right:554px;top:443.03px;font-size:12.6px;line-height:12.6px;color:#000;font-weight:normal;font-style:normal;">10878117812456</div><div class="t" style="right:451px;top:443.33px;font-size:12.6px;line-height:12.6px;color:#000;font-weight:normal;font-style:normal;">286</div><div class="t" style="right:356px;top:443.33px;font-size:12.6px;line-height:12.6px;color:#000;font-weight:normal;font-style:normal;">286</div><div class="t" style="left:604px;top:461.61px;font-size:13.45px;line-height:13.45px;color:#000;font-weight:normal;font-style:normal;">Брянский р-н., Супонево с., Зеленая ул., д. 18</div><div class="t" style="right:674px;top:462.50px;font-size:12.4px;line-height:12.4px;color:#000;font-weight:normal;font-style:normal;">1030097500</div><div class="t" style="right:554px;top:463.03px;font-size:12.6px;line-height:12.6px;color:#000;font-weight:normal;font-style:normal;">10878110949418</div><div class="t" style="right:451px;top:463.33px;font-size:12.6px;line-height:12.6px;color:#000;font-weight:normal;font-style:normal;">170</div><div class="t" style="right:356px;top:463.33px;font-size:12.6px;line-height:12.6px;color:#000;font-weight:normal;font-style:normal;">170</div><div class="t" style="left:604px;top:481.61px;font-size:13.45px;line-height:13.45px;color:#000;font-weight:normal;font-style:normal;">Брянский р-н., Супонево с., 2-й Славянский пер., д. 7</div><div class="t" style="right:674px;top:482.50px;font-size:12.4px;line-height:12.4px;color:#000;font-weight:normal;font-style:normal;">1030095671</div><div class="t" style="right:554px;top:483.03px;font-size:12.6px;line-height:12.6px;color:#000;font-weight:normal;font-style:normal;">11293113204518</div><div class="t" style="right:451px;top:483.33px;font-size:12.6px;line-height:12.6px;color:#000;font-weight:normal;font-style:normal;">68</div><div class="t" style="right:356px;top:483.33px;font-size:12.6px;line-height:12.6px;color:#000;font-weight:normal;font-style:normal;">68</div><div class="t" style="left:604px;top:501.61px;font-size:13.45px;line-height:13.45px;color:#000;font-weight:normal;font-style:normal;">Брянский р-н., Супонево с., 3-й Славянский пер., д. 22</div><div class="t" style="right:674px;top:502.50px;font-size:12.4px;line-height:12.4px;color:#000;font-weight:normal;font-style:normal;">1030003483</div><div class="t" style="right:554px;top:503.03px;font-size:12.6px;line-height:12.6px;color:#000;font-weight:normal;font-style:normal;">11293119235760</div><div class="t" style="right:451px;top:503.33px;font-size:12.6px;line-height:12.6px;color:#000;font-weight:normal;font-style:normal;">83</div><div class="t" style="right:356px;top:503.33px;font-size:12.6px;line-height:12.6px;color:#000;font-weight:normal;font-style:normal;">83</div><div class="t" style="left:604px;top:521.61px;font-size:13.45px;line-height:13.45px;color:#000;font-weight:normal;font-style:normal;">Брянский р-н., Супонево с., Дачная ул., д. 22</div><div class="t" style="right:674px;top:522.50px;font-size:12.4px;line-height:12.4px;color:#000;font-weight:normal;font-style:normal;">1030097334</div><div class="t" style="right:554px;top:523.03px;font-size:12.6px;line-height:12.6px;color:#000;font-weight:normal;font-style:normal;">10878108945423</div><div class="t" style="right:451px;top:523.33px;font-size:12.6px;line-height:12.6px;color:#000;font-weight:normal;font-style:normal;">133</div><div class="t" style="right:356px;top:523.33px;font-size:12.6px;line-height:12.6px;color:#000;font-weight:normal;font-style:normal;">133</div><div class="t" style="left:604px;top:541.61px;font-size:13.45px;line-height:13.45px;color:#000;font-weight:normal;font-style:normal;">Брянский р-н., Супонево с., Дачная ул., д. 23</div><div class="t" style="right:674px;top:542.50px;font-size:12.4px;line-height:12.4px;color:#000;font-weight:normal;font-style:normal;">1030096255</div><div class="t" style="right:554px;top:543.03px;font-size:12.6px;line-height:12.6px;color:#000;font-weight:normal;font-style:normal;">10878110950357</div><div class="t" style="right:451px;top:543.33px;font-size:12.6px;line-height:12.6px;color:#000;font-weight:normal;font-style:normal;">237</div><div class="t" style="right:356px;top:543.33px;font-size:12.6px;line-height:12.6px;color:#000;font-weight:normal;font-style:normal;">237</div><div class="t" style="left:604px;top:561.61px;font-size:13.45px;line-height:13.45px;color:#000;font-weight:normal;font-style:normal;">Брянский р-н., Супонево с., 2-й Славянский пер., д. 5</div><div class="t" style="right:674px;top:562.50px;font-size:12.4px;line-height:12.4px;color:#000;font-weight:normal;font-style:normal;">1030099063</div><div class="t" style="right:554px;top:563.03px;font-size:12.6px;line-height:12.6px;color:#000;font-weight:normal;font-style:normal;">10878110949380</div><div class="t" style="right:451px;top:563.33px;font-size:12.6px;line-height:12.6px;color:#000;font-weight:normal;font-style:normal;">0</div><div class="t" style="right:356px;top:563.33px;font-size:12.6px;line-height:12.6px;color:#000;font-weight:normal;font-style:normal;">0</div><div class="t" style="left:604px;top:581.61px;font-size:13.45px;line-height:13.45px;color:#000;font-weight:normal;font-style:normal;">Брянский р-н., Супонево с., 3-й Славянский пер., д. 11</div><div class="t" style="right:674px;top:582.50px;font-size:12.4px;line-height:12.4px;color:#000;font-weight:normal;font-style:normal;">1030095628</div><div class="t" style="right:554px;top:583.03px;font-size:12.6px;line-height:12.6px;color:#000;font-weight:normal;font-style:normal;">10878110949485</div><div class="t" style="right:451px;top:583.33px;font-size:12.6px;line-height:12.6px;color:#000;font-weight:normal;font-style:normal;">670</div><div class="t" style="right:356px;top:583.33px;font-size:12.6px;line-height:12.6px;color:#000;font-weight:normal;font-style:normal;">670</div><div class="t" style="left:604px;top:601.61px;font-size:13.45px;line-height:13.45px;color:#000;font-weight:normal;font-style:normal;">Брянский р-н., Супонево с., Зеленая ул., д. 8</div><div class="t" style="right:674px;top:602.50px;font-size:12.4px;line-height:12.4px;color:#000;font-weight:normal;font-style:normal;">1030095651</div><div class="t" style="right:554px;top:603.03px;font-size:12.6px;line-height:12.6px;color:#000;font-weight:normal;font-style:normal;">10878110949492</div><div class="t" style="right:451px;top:603.33px;font-size:12.6px;line-height:12.6px;color:#000;font-weight:normal;font-style:normal;">399</div><div class="t" style="right:356px;top:603.33px;font-size:12.6px;line-height:12.6px;color:#000;font-weight:normal;font-style:normal;">399</div><div class="t" style="left:604px;top:621.61px;font-size:13.45px;line-height:13.45px;color:#000;font-weight:normal;font-style:normal;">Брянский р-н., Супонево с., 2-й Славянский пер., д. 20</div><div class="t" style="right:674px;top:622.50px;font-size:12.4px;line-height:12.4px;color:#000;font-weight:normal;font-style:normal;">1030009265</div><div class="t" style="right:554px;top:623.03px;font-size:12.6px;line-height:12.6px;color:#000;font-weight:normal;font-style:normal;">11293121284506</div><div class="t" style="right:451px;top:623.33px;font-size:12.6px;line-height:12.6px;color:#000;font-weight:normal;font-style:normal;">212</div><div class="t" style="right:356px;top:623.33px;font-size:12.6px;line-height:12.6px;color:#000;font-weight:normal;font-style:normal;">212</div><div class="t" style="left:604px;top:641.61px;font-size:13.45px;line-height:13.45px;color:#000;font-weight:normal;font-style:normal;">Брянский р-н., Супонево с., 1-й Дачный пер., д. 3</div><div class="t" style="right:674px;top:642.50px;font-size:12.4px;line-height:12.4px;color:#000;font-weight:normal;font-style:normal;">1030097832</div><div class="t" style="right:554px;top:643.03px;font-size:12.6px;line-height:12.6px;color:#000;font-weight:normal;font-style:normal;">10878108945813</div><div class="t" style="right:451px;top:643.33px;font-size:12.6px;line-height:12.6px;color:#000;font-weight:normal;font-style:normal;">132</div><div class="t" style="right:356px;top:643.33px;font-size:12.6px;line-height:12.6px;color:#000;font-weight:normal;font-style:normal;">132</div><div class="t" style="left:604px;top:661.61px;font-size:13.45px;line-height:13.45px;color:#000;font-weight:normal;font-style:normal;">Брянский р-н., Супонево с., 3-й Славянский пер., д. 13</div><div class="t" style="right:674px;top:662.50px;font-size:12.4px;line-height:12.4px;color:#000;font-weight:normal;font-style:normal;">1030095660</div><div class="t" style="right:554px;top:663.03px;font-size:12.6px;line-height:12.6px;color:#000;font-weight:normal;font-style:normal;">10878109948304</div><div class="t" style="right:451px;top:663.33px;font-size:12.6px;line-height:12.6px;color:#000;font-weight:normal;font-style:normal;">306</div><div class="t" style="right:356px;top:663.33px;font-size:12.6px;line-height:12.6px;color:#000;font-weight:normal;font-style:normal;">306</div><div class="t" style="left:604px;top:681.61px;font-size:13.45px;line-height:13.45px;color:#000;font-weight:normal;font-style:normal;">Брянский р-н., Супонево с., Дачная ул., д. 3</div><div class="t" style="right:674px;top:682.50px;font-size:12.4px;line-height:12.4px;color:#000;font-weight:normal;font-style:normal;">1030095637</div><div class="t" style="right:554px;top:683.03px;font-size:12.6px;line-height:12.6px;color:#000;font-weight:normal;font-style:normal;">10878110949428</div><div class="t" style="right:451px;top:683.33px;font-size:12.6px;line-height:12.6px;color:#000;font-weight:normal;font-style:normal;">1072</div><div class="t" style="right:356px;top:683.33px;font-size:12.6px;line-height:12.6px;color:#000;font-weight:normal;font-style:normal;">1072</div><div class="t" style="left:604px;top:701.61px;font-size:13.45px;line-height:13.45px;color:#000;font-weight:normal;font-style:normal;">Брянский р-н., Супонево с., 2-й Славянский пер., д. 2</div><div class="t" style="right:674px;top:702.50px;font-size:12.4px;line-height:12.4px;color:#000;font-weight:normal;font-style:normal;">1030095646</div><div class="t" style="right:554px;top:703.03px;font-size:12.6px;line-height:12.6px;color:#000;font-weight:normal;font-style:normal;">11293112169064</div><div class="t" style="right:451px;top:703.33px;font-size:12.6px;line-height:12.6px;color:#000;font-weight:normal;font-style:normal;">285</div><div class="t" style="right:356px;top:703.33px;font-size:12.6px;line-height:12.6px;color:#000;font-weight:normal;font-style:normal;">285</div><div class="t" style="left:604px;top:721.61px;font-size:13.45px;line-height:13.45px;color:#000;font-weight:normal;font-style:normal;">Брянский р-н., Супонево с., 2-й Славянский пер., д. 21</div><div class="t" style="right:674px;top:722.50px;font-size:12.4px;line-height:12.4px;color:#000;font-weight:normal;font-style:normal;">1030099038</div><div class="t" style="right:554px;top:723.03px;font-size:12.6px;line-height:12.6px;color:#000;font-weight:normal;font-style:normal;">10878109949262</div><div class="t" style="right:451px;top:723.33px;font-size:12.6px;line-height:12.6px;color:#000;font-weight:normal;font-style:normal;">411</div><div class="t" style="right:356px;top:723.33px;font-size:12.6px;line-height:12.6px;color:#000;font-weight:normal;font-style:normal;">411</div><div class="t" style="left:604px;top:741.61px;font-size:13.45px;line-height:13.45px;color:#000;font-weight:normal;font-style:normal;">Брянский р-н., Супонево с., Дачная ул., д. 4</div><div class="t" style="right:674px;top:742.50px;font-size:12.4px;line-height:12.4px;color:#000;font-weight:normal;font-style:normal;">1030095655</div><div class="t" style="right:554px;top:743.03px;font-size:12.6px;line-height:12.6px;color:#000;font-weight:normal;font-style:normal;">10878110949454</div><div class="t" style="right:451px;top:743.33px;font-size:12.6px;line-height:12.6px;color:#000;font-weight:normal;font-style:normal;">130</div><div class="t" style="right:356px;top:743.33px;font-size:12.6px;line-height:12.6px;color:#000;font-weight:normal;font-style:normal;">130</div><div class="t" style="left:604px;top:761.61px;font-size:13.45px;line-height:13.45px;color:#000;font-weight:normal;font-style:normal;">Брянский р-н., Супонево с., 2-й Славянский пер., д. 13</div><div class="t" style="right:674px;top:762.50px;font-size:12.4px;line-height:12.4px;color:#000;font-weight:normal;font-style:normal;">1030095755</div><div class="t" style="right:554px;top:763.03px;font-size:12.6px;line-height:12.6px;color:#000;font-weight:normal;font-style:normal;">11293105137260</div><div class="t" style="right:451px;top:763.33px;font-size:12.6px;line-height:12.6px;color:#000;font-weight:normal;font-style:normal;">419</div><div class="t" style="right:356px;top:763.33px;font-size:12.6px;line-height:12.6px;color:#000;font-weight:normal;font-style:normal;">419</div><div class="t" style="left:604px;top:781.61px;font-size:13.45px;line-height:13.45px;color:#000;font-weight:normal;font-style:normal;">Брянский р-н., Супонево с., 3-й Славянский пер., д. 19</div><div class="t" style="right:674px;top:782.50px;font-size:12.4px;line-height:12.4px;color:#000;font-weight:normal;font-style:normal;">1030095635</div><div class="t" style="right:554px;top:783.03px;font-size:12.6px;line-height:12.6px;color:#000;font-weight:normal;font-style:normal;">11293112173996</div><div class="t" style="right:451px;top:783.33px;font-size:12.6px;line-height:12.6px;color:#000;font-weight:normal;font-style:normal;">470</div><div class="t" style="right:356px;top:783.33px;font-size:12.6px;line-height:12.6px;color:#000;font-weight:normal;font-style:normal;">470</div><div class="t" style="left:604px;top:801.61px;font-size:13.45px;line-height:13.45px;color:#000;font-weight:normal;font-style:normal;">241520, Брянская обл, Брянский р-н, Супонево с, 2-й Дачный пер, дом № 3</div><div class="t" style="right:674px;top:802.50px;font-size:12.4px;line-height:12.4px;color:#000;font-weight:normal;font-style:normal;">1030099688</div><div class="t" style="right:554px;top:803.03px;font-size:12.6px;line-height:12.6px;color:#000;font-weight:normal;font-style:normal;">10878110949405</div><div class="t" style="right:451px;top:803.33px;font-size:12.6px;line-height:12.6px;color:#000;font-weight:normal;font-style:normal;">0</div><div class="t" style="right:356px;top:803.33px;font-size:12.6px;line-height:12.6px;color:#000;font-weight:normal;font-style:normal;">0</div><div class="t" style="left:604px;top:821.61px;font-size:13.45px;line-height:13.45px;color:#000;font-weight:normal;font-style:normal;">Брянский р-н., Супонево с., 1-й Славянский пер., д. 4</div><div class="t" style="right:674px;top:822.50px;font-size:12.4px;line-height:12.4px;color:#000;font-weight:normal;font-style:normal;">1030003567</div><div class="t" style="right:554px;top:823.03px;font-size:12.6px;line-height:12.6px;color:#000;font-weight:normal;font-style:normal;">11293112178628</div><div class="t" style="right:451px;top:823.33px;font-size:12.6px;line-height:12.6px;color:#000;font-weight:normal;font-style:normal;">415</div><div class="t" style="right:356px;top:823.33px;font-size:12.6px;line-height:12.6px;color:#000;font-weight:normal;font-style:normal;">415</div><div class="t" style="left:604px;top:841.61px;font-size:13.45px;line-height:13.45px;color:#000;font-weight:normal;font-style:normal;">Брянский р-н., Супонево с., Дачная ул., д. 24</div><div class="t" style="right:674px;top:842.50px;font-size:12.4px;line-height:12.4px;color:#000;font-weight:normal;font-style:normal;">1030001234</div><div class="t" style="right:554px;top:843.03px;font-size:12.6px;line-height:12.6px;color:#000;font-weight:normal;font-style:normal;">11293121311297</div><div class="t" style="right:451px;top:843.33px;font-size:12.6px;line-height:12.6px;color:#000;font-weight:normal;font-style:normal;">379</div><div class="t" style="right:356px;top:843.33px;font-size:12.6px;line-height:12.6px;color:#000;font-weight:normal;font-style:normal;">379</div><div class="r" style="left:601px;top:296px;width:548px;height:2px;background:#217346;"></div><div class="r" style="left:601px;top:316px;width:545px;height:2px;background:#217346;"></div><div class="r" style="left:601px;top:296px;width:2px;height:22px;background:#217346;"></div><div class="r" style="left:1147px;top:296px;width:2px;height:18px;background:#217346;"></div><div class="r" style="left:1146px;top:315px;width:6px;height:6px;background:#217346;outline:1px solid #fff;"></div><div class="r" style="left:0px;top:852px;width:1922px;height:8px;background:#ffffff;"></div>
</div></body></html>
